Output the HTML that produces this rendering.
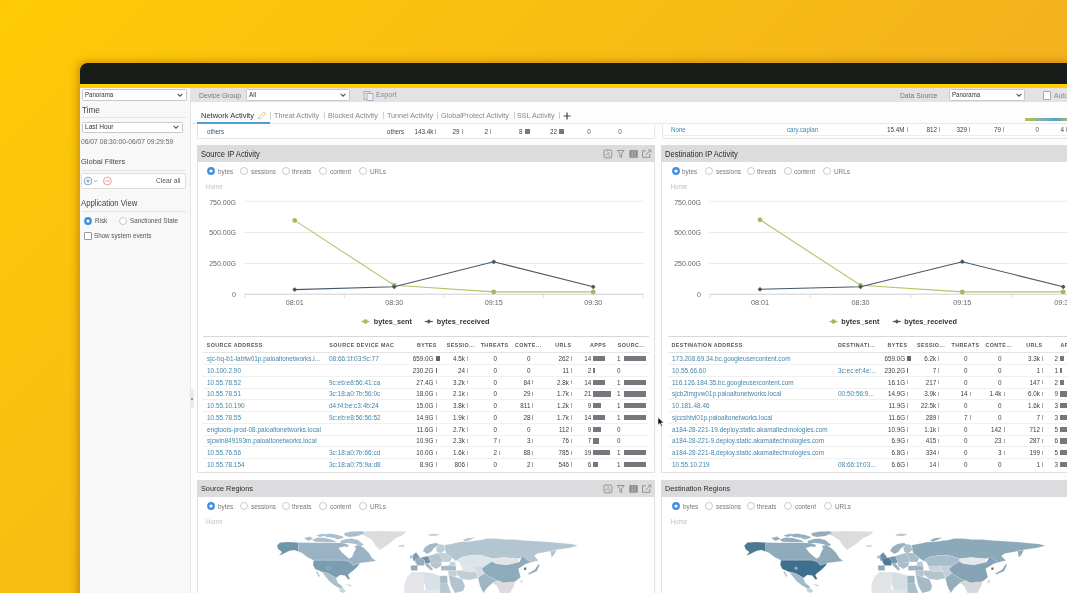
<!DOCTYPE html>
<html><head><meta charset="utf-8"><style>
html,body{margin:0;padding:0;}
body{width:1067px;height:593px;overflow:hidden;position:relative;background:linear-gradient(135deg,#ffca05 0%,#eea629 100%);font-family:"Liberation Sans", sans-serif;}
.t{position:absolute;white-space:nowrap;font-family:"Liberation Sans", sans-serif;}
.r{position:absolute;}
</style></head><body><div id="w" style="position:absolute;left:0;top:0;width:1067px;height:593px;filter:blur(0.45px);">
<div class="r" style="left:80.0px;top:63.0px;width:1100.0px;height:600.0px;background:#171c19;border-top-left-radius:8px;box-shadow:-2px -1px 7px 1px rgba(130,80,0,0.38);"></div>
<div class="r" style="left:80.0px;top:84.0px;width:1100.0px;height:520.0px;background:#fbfbfb;"></div>
<div class="r" style="left:80.0px;top:84.3px;width:1100.0px;height:3.7px;background:#ffd000;"></div>
<div class="r" style="left:190.0px;top:88.0px;width:1000.0px;height:14.0px;background:#e3e3e6;"></div>
<div class="r" style="left:80.0px;top:88.0px;width:111.0px;height:520.0px;background:#f8f8f8;border-right:1px solid #e6e6e6;box-sizing:border-box;"></div>
<div class="r" style="left:191.0px;top:102.0px;width:1000.0px;height:500.0px;background:#fdfdfd;"></div>
<div class="r" style="left:82.0px;top:89.3px;width:104.5px;height:11.5px;background:#fff;border:1px solid #c9c9c9;border-radius:1.5px;box-sizing:border-box;"></div>
<div class="t" style="left:85.0px;top:89.0px;font-size:6.83px;line-height:12px;color:#333;font-weight:normal;transform:scaleX(0.8929);transform-origin:left center;">Panorama</div>
<svg class="r" style="left:176.5px;top:93.0px" width="6" height="4" viewBox="0 0 6 4"><path d="M0.6 0.8 L3 3.2 L5.4 0.8" fill="none" stroke="#555" stroke-width="1.05"/></svg>
<div class="t" style="left:82.0px;top:104.4px;font-size:8.61px;line-height:12px;color:#444;font-weight:normal;transform:scaleX(0.9524);transform-origin:left center;">Time</div>
<div class="r" style="left:82.0px;top:117.3px;width:104.0px;height:1.0px;background:#e4e4e4;"></div>
<div class="r" style="left:82.0px;top:121.5px;width:101.0px;height:11.0px;background:#fff;border:1px solid #c9c9c9;border-radius:1.5px;box-sizing:border-box;"></div>
<div class="t" style="left:85.0px;top:121.0px;font-size:7.39px;line-height:12px;color:#333;font-weight:normal;transform:scaleX(0.8929);transform-origin:left center;">Last Hour</div>
<svg class="r" style="left:173.0px;top:125.0px" width="6" height="4" viewBox="0 0 6 4"><path d="M0.6 0.8 L3 3.2 L5.4 0.8" fill="none" stroke="#555" stroke-width="1.05"/></svg>
<div class="t" style="left:81.2px;top:135.8px;font-size:7.09px;line-height:12px;color:#666;font-weight:normal;transform:scaleX(0.9524);transform-origin:left center;">06/07 08:30:00-06/07 09:29:59</div>
<div class="t" style="left:81.2px;top:156.0px;font-size:8.1px;line-height:12px;color:#444;font-weight:normal;transform:scaleX(0.9259);transform-origin:left center;">Global Filters</div>
<div class="r" style="left:82.0px;top:169.5px;width:104.0px;height:1.0px;background:#e4e4e4;"></div>
<div class="r" style="left:81.0px;top:173.0px;width:105.0px;height:16.0px;background:#fff;border:1px solid #dedede;border-radius:2px;box-sizing:border-box;"></div>
<svg class="r" style="left:83px;top:175.5px" width="30" height="10" viewBox="0 0 30 10"><circle cx="5" cy="5" r="3.9" fill="none" stroke="#6b8fb3" stroke-width="0.8"/><path d="M5 2.8V7.2M2.8 5H7.2" stroke="#6b8fb3" stroke-width="0.8"/><path d="M11.3 4.2L12.8 5.7L14.3 4.2" fill="none" stroke="#6b8fb3" stroke-width="0.8"/><circle cx="24.4" cy="5" r="3.9" fill="none" stroke="#d98a8a" stroke-width="0.8"/><path d="M22.2 5H26.6" stroke="#d98a8a" stroke-width="0.8"/></svg>
<div class="t" style="left:156.0px;top:174.5px;font-size:7.37px;line-height:12px;color:#555;font-weight:normal;transform:scaleX(0.9091);transform-origin:left center;">Clear all</div>
<div class="t" style="left:81.2px;top:196.7px;font-size:8.32px;line-height:12px;color:#444;font-weight:normal;transform:scaleX(0.9259);transform-origin:left center;">Application View</div>
<div class="r" style="left:82.0px;top:210.5px;width:104.0px;height:1.0px;background:#e4e4e4;"></div>
<svg class="r" style="left:83.1px;top:215.5px" width="10" height="10" viewBox="0 0 10 10"><circle cx="5" cy="5" r="3.9" fill="#3d8fe0"/><circle cx="5" cy="5" r="1.6" fill="#fff"/></svg>
<div class="t" style="left:94.8px;top:214.5px;font-size:7.06px;line-height:12px;color:#555;font-weight:normal;transform:scaleX(0.8929);transform-origin:left center;">Risk</div>
<svg class="r" style="left:118.1px;top:215.5px" width="10" height="10" viewBox="0 0 10 10"><circle cx="5" cy="5" r="3.5" fill="#fff" stroke="#bdbdbd" stroke-width="0.8"/></svg>
<div class="t" style="left:130.0px;top:214.5px;font-size:7.06px;line-height:12px;color:#555;font-weight:normal;transform:scaleX(0.8929);transform-origin:left center;">Sanctioned State</div>
<div class="r" style="left:83.5px;top:232.0px;width:8.0px;height:8.0px;background:#fff;border:1px solid #9a9a9a;border-radius:1px;box-sizing:border-box;"></div>
<div class="t" style="left:94.2px;top:230.0px;font-size:7.19px;line-height:12px;color:#555;font-weight:normal;transform:scaleX(0.8696);transform-origin:left center;">Show system events</div>
<div class="r" style="left:190.5px;top:389.0px;width:3.0px;height:19.0px;background:#ececec;"></div>
<div class="r" style="left:191.0px;top:398.0px;width:2.0px;height:2.0px;background:#999;"></div>
<div class="t" style="left:199.0px;top:89.8px;font-size:7.59px;line-height:12px;color:#777;font-weight:normal;transform:scaleX(0.9091);transform-origin:left center;">Device Group</div>
<div class="r" style="left:246.4px;top:89.0px;width:104.0px;height:11.6px;background:#fff;border:1px solid #c9c9c9;border-radius:1.5px;box-sizing:border-box;"></div>
<div class="t" style="left:249.4px;top:88.8px;font-size:7.17px;line-height:12px;color:#333;font-weight:normal;transform:scaleX(0.8929);transform-origin:left center;">All</div>
<svg class="r" style="left:340.4px;top:92.8px" width="6" height="4" viewBox="0 0 6 4"><path d="M0.6 0.8 L3 3.2 L5.4 0.8" fill="none" stroke="#555" stroke-width="1.05"/></svg>
<svg class="r" style="left:363px;top:89.5px" width="11" height="11" viewBox="0 0 11 11"><rect x="1" y="1.5" width="6" height="8" fill="none" stroke="#9aa" stroke-width="0.8"/><rect x="4" y="3.5" width="6" height="7" fill="#eef" stroke="#9aa" stroke-width="0.8"/></svg>
<div class="t" style="left:376.3px;top:89.0px;font-size:7.67px;line-height:12px;color:#888;font-weight:normal;transform:scaleX(0.9259);transform-origin:left center;">Export</div>
<div class="t" style="left:899.6px;top:89.8px;font-size:7.43px;line-height:12px;color:#777;font-weight:normal;transform:scaleX(0.9091);transform-origin:left center;">Data Source</div>
<div class="r" style="left:949.2px;top:89.4px;width:76.3px;height:11.4px;background:#fff;border:1px solid #c9c9c9;border-radius:1.5px;box-sizing:border-box;"></div>
<div class="t" style="left:952.2px;top:89.1px;font-size:6.83px;line-height:12px;color:#333;font-weight:normal;transform:scaleX(0.8929);transform-origin:left center;">Panorama</div>
<svg class="r" style="left:1015.5px;top:93.1px" width="6" height="4" viewBox="0 0 6 4"><path d="M0.6 0.8 L3 3.2 L5.4 0.8" fill="none" stroke="#555" stroke-width="1.05"/></svg>
<div class="r" style="left:1042.6px;top:91.1px;width:8.5px;height:8.5px;background:#fff;border:1px solid #a8a8a8;border-radius:1px;box-sizing:border-box;"></div>
<div class="t" style="left:1053.5px;top:89.8px;font-size:7.34px;line-height:12px;color:#888;font-weight:normal;transform:scaleX(0.9259);transform-origin:left center;">Auto</div>
<div class="t" style="left:200.6px;top:109.6px;font-size:7.88px;line-height:12px;color:#333;font-weight:normal;transform:scaleX(0.9524);transform-origin:left center;">Network Activity</div>
<div class="t" style="left:274.2px;top:109.6px;font-size:7.56px;line-height:12px;color:#888;font-weight:normal;transform:scaleX(0.9524);transform-origin:left center;">Threat Activity</div>
<div class="t" style="left:328.0px;top:109.6px;font-size:7.56px;line-height:12px;color:#888;font-weight:normal;transform:scaleX(0.9524);transform-origin:left center;">Blocked Activity</div>
<div class="t" style="left:386.6px;top:109.6px;font-size:7.56px;line-height:12px;color:#888;font-weight:normal;transform:scaleX(0.9524);transform-origin:left center;">Tunnel Activity</div>
<div class="t" style="left:440.9px;top:109.6px;font-size:7.56px;line-height:12px;color:#888;font-weight:normal;transform:scaleX(0.9524);transform-origin:left center;">GlobalProtect Activity</div>
<div class="t" style="left:517.4px;top:109.6px;font-size:7.56px;line-height:12px;color:#888;font-weight:normal;transform:scaleX(0.9524);transform-origin:left center;">SSL Activity</div>
<div class="r" style="left:270.0px;top:112.0px;width:0.8px;height:7.0px;background:#cfcfcf;"></div>
<div class="r" style="left:323.7px;top:112.0px;width:0.8px;height:7.0px;background:#cfcfcf;"></div>
<div class="r" style="left:382.5px;top:112.0px;width:0.8px;height:7.0px;background:#cfcfcf;"></div>
<div class="r" style="left:437.0px;top:112.0px;width:0.8px;height:7.0px;background:#cfcfcf;"></div>
<div class="r" style="left:513.5px;top:112.0px;width:0.8px;height:7.0px;background:#cfcfcf;"></div>
<div class="r" style="left:559.0px;top:112.0px;width:0.8px;height:7.0px;background:#cfcfcf;"></div>
<svg class="r" style="left:257px;top:111px" width="10" height="9" viewBox="0 0 10 9"><path d="M1.5 7.8 L2 5.8 L6.8 1 L8.6 2.8 L3.8 7.6 Z" fill="none" stroke="#d8c37a" stroke-width="0.9"/></svg>
<svg class="r" style="left:562.5px;top:111.5px" width="8" height="8" viewBox="0 0 8 8"><path d="M4 0.5V7.5M0.5 4H7.5" stroke="#444" stroke-width="1.2"/></svg>
<div class="r" style="left:191.0px;top:122.5px;width:900.0px;height:1.0px;background:#e8e8e8;"></div>
<div class="r" style="left:197.0px;top:122.4px;width:72.5px;height:1.8px;background:#4aa0d6;"></div>
<div class="r" style="left:196.8px;top:124.8px;width:458.0px;height:13.8px;background:#fff;border:1px solid #e3e3e3;border-top:none;border-radius:0 0 2px 2px;box-sizing:border-box;"></div>
<div class="r" style="left:661.5px;top:124.8px;width:500.0px;height:13.8px;background:#fff;border:1px solid #e3e3e3;border-top:none;border-radius:0 0 2px 2px;box-sizing:border-box;"></div>
<div class="r" style="left:662.0px;top:135.3px;width:500.0px;height:0.7px;background:#ececec;"></div>
<div class="t" style="left:206.8px;top:126.1px;font-size:7.13px;line-height:12px;color:#2f5877;font-weight:normal;transform:scaleX(0.8696);transform-origin:left center;">others</div>
<div class="t" style="left:386.6px;top:126.1px;font-size:7.13px;line-height:12px;color:#444;font-weight:normal;transform:scaleX(0.8696);transform-origin:left center;">others</div>
<div class="t" style="right:633.6px;top:126.2px;font-size:6.3px;line-height:12px;color:#3d3d3d;font-weight:normal;">143.4k</div>
<div class="r" style="left:435.4px;top:129.3px;width:1.0px;height:5.0px;background:#aaa;"></div>
<div class="t" style="right:607.5px;top:126.2px;font-size:6.3px;line-height:12px;color:#3d3d3d;font-weight:normal;">29</div>
<div class="r" style="left:461.5px;top:129.3px;width:1.0px;height:5.0px;background:#aaa;"></div>
<div class="t" style="right:579.0px;top:126.2px;font-size:6.3px;line-height:12px;color:#3d3d3d;font-weight:normal;">2</div>
<div class="r" style="left:490.0px;top:129.3px;width:1.0px;height:5.0px;background:#aaa;"></div>
<div class="t" style="right:544.5px;top:126.2px;font-size:6.3px;line-height:12px;color:#3d3d3d;font-weight:normal;">8</div>
<div class="r" style="left:524.5px;top:129.3px;width:5.0px;height:5.0px;background:#777;"></div>
<div class="t" style="right:510.0px;top:126.2px;font-size:6.3px;line-height:12px;color:#3d3d3d;font-weight:normal;">22</div>
<div class="r" style="left:559.0px;top:129.3px;width:5.0px;height:5.0px;background:#777;"></div>
<div class="t" style="left:489.0px;width:200px;text-align:center;top:126.2px;font-size:6.3px;line-height:12px;color:#555;font-weight:normal;">0</div>
<div class="t" style="left:520.0px;width:200px;text-align:center;top:126.2px;font-size:6.3px;line-height:12px;color:#555;font-weight:normal;">0</div>
<div class="t" style="left:671.3px;top:123.6px;font-size:6.94px;line-height:12px;color:#4587aa;font-weight:normal;transform:scaleX(0.8929);transform-origin:left center;">None</div>
<div class="t" style="left:787.3px;top:123.6px;font-size:6.94px;line-height:12px;color:#4587aa;font-weight:normal;transform:scaleX(0.8929);transform-origin:left center;">cary.caplan</div>
<div class="t" style="right:162.5px;top:123.6px;font-size:6.3px;line-height:12px;color:#3d3d3d;font-weight:normal;">15.4M</div>
<div class="r" style="left:906.5px;top:126.7px;width:1.0px;height:5.0px;background:#aaa;"></div>
<div class="t" style="right:130.0px;top:123.6px;font-size:6.3px;line-height:12px;color:#3d3d3d;font-weight:normal;">812</div>
<div class="r" style="left:939.0px;top:126.7px;width:1.0px;height:5.0px;background:#aaa;"></div>
<div class="t" style="right:100.0px;top:123.6px;font-size:6.3px;line-height:12px;color:#3d3d3d;font-weight:normal;">329</div>
<div class="r" style="left:969.0px;top:126.7px;width:1.0px;height:5.0px;background:#aaa;"></div>
<div class="t" style="right:66.0px;top:123.6px;font-size:6.3px;line-height:12px;color:#3d3d3d;font-weight:normal;">79</div>
<div class="r" style="left:1003.0px;top:126.7px;width:1.0px;height:5.0px;background:#aaa;"></div>
<div class="t" style="left:937.2px;width:200px;text-align:center;top:123.6px;font-size:6.3px;line-height:12px;color:#555;font-weight:normal;">0</div>
<div class="t" style="right:3.0px;top:123.6px;font-size:6.3px;line-height:12px;color:#3d3d3d;font-weight:normal;">4</div>
<div class="r" style="left:1066.0px;top:126.7px;width:1.0px;height:5.0px;background:#aaa;"></div>
<div class="r" style="left:1025px;top:117.9px;width:50px;height:2.7px;background:linear-gradient(90deg,#b8c24a 0%,#6cabc8 45%,#58a0c8 60%,#c8c85a 100%);"></div>
<div class="r" style="left:196.8px;top:145.0px;width:458.3px;height:328.0px;background:#fff;border:1px solid #e1e1e1;box-sizing:border-box;"></div>
<div class="r" style="left:196.8px;top:145.0px;width:458.3px;height:16.8px;background:#dcdcdf;"></div>
<div class="t" style="left:200.6px;top:147.7px;font-size:8.36px;line-height:12px;color:#2b2b2b;font-weight:normal;transform:scaleX(0.9091);transform-origin:left center;">Source IP Activity</div>
<svg class="r" style="left:602.9px;top:148.6px" width="52" height="10" viewBox="0 0 52 10"><rect x="1" y="1" width="7.8" height="7.8" rx="1.3" fill="none" stroke="#8a8a8a" stroke-width="0.9"/><path d="M2.5 6.8L4.5 4.8L7.5 7.5M4.3 2.7L6.5 4.5" fill="none" stroke="#8a8a8a" stroke-width="0.8"/><path d="M14.3 1.5H21.2L18.6 4.6V8.5L16.9 7.6V4.6Z" fill="none" stroke="#8a8a8a" stroke-width="0.9"/><rect x="26.3" y="1" width="8.5" height="7.8" rx="1" fill="#8d8d8d"/><path d="M29.2 1.8V8M31.9 1.8V8" stroke="#c9c9c9" stroke-width="0.7"/><path d="M46.8 5V8.3H39.5V1.8H43" fill="none" stroke="#8a8a8a" stroke-width="0.9"/><path d="M42.5 6L47.5 1.2M45.3 1H47.8V3.5" fill="none" stroke="#8a8a8a" stroke-width="0.9"/></svg>
<svg class="r" style="left:206.3px;top:166.2px" width="10" height="10" viewBox="0 0 10 10"><circle cx="5" cy="5" r="3.9" fill="#3d8fe0"/><circle cx="5" cy="5" r="1.6" fill="#fff"/></svg>
<div class="t" style="left:217.6px;top:165.9px;font-size:6.91px;line-height:12px;color:#777;font-weight:normal;transform:scaleX(0.9259);transform-origin:left center;">bytes</div>
<svg class="r" style="left:239.4px;top:166.2px" width="10" height="10" viewBox="0 0 10 10"><circle cx="5" cy="5" r="3.5" fill="#fff" stroke="#bdbdbd" stroke-width="0.8"/></svg>
<div class="t" style="left:251.0px;top:165.9px;font-size:6.91px;line-height:12px;color:#777;font-weight:normal;transform:scaleX(0.9259);transform-origin:left center;">sessions</div>
<svg class="r" style="left:280.9px;top:166.2px" width="10" height="10" viewBox="0 0 10 10"><circle cx="5" cy="5" r="3.5" fill="#fff" stroke="#bdbdbd" stroke-width="0.8"/></svg>
<div class="t" style="left:292.4px;top:165.9px;font-size:6.91px;line-height:12px;color:#777;font-weight:normal;transform:scaleX(0.9259);transform-origin:left center;">threats</div>
<svg class="r" style="left:318.3px;top:166.2px" width="10" height="10" viewBox="0 0 10 10"><circle cx="5" cy="5" r="3.5" fill="#fff" stroke="#bdbdbd" stroke-width="0.8"/></svg>
<div class="t" style="left:329.8px;top:165.9px;font-size:6.91px;line-height:12px;color:#777;font-weight:normal;transform:scaleX(0.9259);transform-origin:left center;">content</div>
<svg class="r" style="left:357.8px;top:166.2px" width="10" height="10" viewBox="0 0 10 10"><circle cx="5" cy="5" r="3.5" fill="#fff" stroke="#bdbdbd" stroke-width="0.8"/></svg>
<div class="t" style="left:369.5px;top:165.9px;font-size:6.91px;line-height:12px;color:#777;font-weight:normal;transform:scaleX(0.9259);transform-origin:left center;">URLs</div>
<div class="t" style="left:205.9px;top:181.0px;font-size:6.3px;line-height:12px;color:#c2c2c2;font-weight:normal;">Home</div>
<div class="t" style="right:831.0px;top:196.8px;font-size:7.0px;line-height:12px;color:#666;font-weight:normal;">750.00G</div>
<div class="t" style="right:831.0px;top:227.3px;font-size:7.0px;line-height:12px;color:#666;font-weight:normal;">500.00G</div>
<div class="t" style="right:831.0px;top:258.3px;font-size:7.0px;line-height:12px;color:#666;font-weight:normal;">250.00G</div>
<div class="t" style="right:831.0px;top:288.5px;font-size:7.0px;line-height:12px;color:#666;font-weight:normal;">0</div>
<svg class="r" style="left:0px;top:0px" width="1067" height="593" viewBox="0 0 1067 593"><path d="M244.6 201.3H643.4" stroke="#e6e6e6" stroke-width="0.9"/><path d="M244.6 232.5H643.4" stroke="#e6e6e6" stroke-width="0.9"/><path d="M244.6 263.5H643.4" stroke="#e6e6e6" stroke-width="0.9"/><path d="M244.6 294.2H643.4" stroke="#cfcfcf" stroke-width="1"/><path d="M244.9 294.2V297.8" stroke="#dadada" stroke-width="0.9"/><path d="M344.4 294.2V297.8" stroke="#dadada" stroke-width="0.9"/><path d="M443.9 294.2V297.8" stroke="#dadada" stroke-width="0.9"/><path d="M543.5 294.2V297.8" stroke="#dadada" stroke-width="0.9"/><path d="M643.0 294.2V297.8" stroke="#dadada" stroke-width="0.9"/><polyline points="294.7,220.4 394.2,285.3 493.7,291.9 593.2,291.9" fill="none" stroke="#b8c266" stroke-width="1.1"/><polyline points="294.7,289.6 394.2,286.8 493.7,261.8 593.2,286.8" fill="none" stroke="#43596a" stroke-width="1.1"/><circle cx="294.7" cy="220.4" r="2.4" fill="#aab65a"/><circle cx="394.2" cy="285.3" r="2.4" fill="#aab65a"/><circle cx="493.7" cy="291.9" r="2.4" fill="#aab65a"/><circle cx="593.2" cy="291.9" r="2.4" fill="#aab65a"/><path d="M294.7 287.2L297.1 289.6L294.7 292.0L292.3 289.6Z" fill="#43596a"/><path d="M394.2 284.4L396.6 286.8L394.2 289.2L391.8 286.8Z" fill="#43596a"/><path d="M493.7 259.4L496.1 261.8L493.7 264.2L491.3 261.8Z" fill="#43596a"/><path d="M593.2 284.4L595.6 286.8L593.2 289.2L590.8 286.8Z" fill="#43596a"/></svg>
<div class="t" style="left:194.7px;width:200px;text-align:center;top:297.0px;font-size:7.2px;line-height:12px;color:#666;font-weight:normal;">08:01</div>
<div class="t" style="left:294.2px;width:200px;text-align:center;top:297.0px;font-size:7.2px;line-height:12px;color:#666;font-weight:normal;">08:30</div>
<div class="t" style="left:393.7px;width:200px;text-align:center;top:297.0px;font-size:7.2px;line-height:12px;color:#666;font-weight:normal;">09:15</div>
<div class="t" style="left:493.2px;width:200px;text-align:center;top:297.0px;font-size:7.2px;line-height:12px;color:#666;font-weight:normal;">09:30</div>
<svg class="r" style="left:360px;top:317px" width="80" height="9" viewBox="0 0 80 9"><path d="M1.3 4.5H9.7" stroke="#b3bd63" stroke-width="1.2"/><circle cx="5.5" cy="4.5" r="2.3" fill="#aab65a"/><path d="M64.8 4.5H72.8" stroke="#43596a" stroke-width="1.2"/><path d="M68.8 2.2L71.1 4.5L68.8 6.8L66.5 4.5Z" fill="#43596a"/></svg>
<div class="t" style="left:373.8px;top:315.6px;font-size:7.3px;line-height:12px;color:#333;font-weight:bold;">bytes_sent</div>
<div class="t" style="left:436.7px;top:315.6px;font-size:7.3px;line-height:12px;color:#333;font-weight:bold;">bytes_received</div>
<div class="r" style="left:661.2px;top:145.0px;width:460.0px;height:328.0px;background:#fff;border:1px solid #e1e1e1;box-sizing:border-box;"></div>
<div class="r" style="left:661.2px;top:145.0px;width:460.0px;height:16.8px;background:#dcdcdf;"></div>
<div class="t" style="left:665.0px;top:147.7px;font-size:8.36px;line-height:12px;color:#2b2b2b;font-weight:normal;transform:scaleX(0.9091);transform-origin:left center;">Destination IP Activity</div>
<svg class="r" style="left:670.9px;top:166.0px" width="10" height="10" viewBox="0 0 10 10"><circle cx="5" cy="5" r="3.9" fill="#3d8fe0"/><circle cx="5" cy="5" r="1.6" fill="#fff"/></svg>
<div class="t" style="left:682.2px;top:165.7px;font-size:6.91px;line-height:12px;color:#777;font-weight:normal;transform:scaleX(0.9259);transform-origin:left center;">bytes</div>
<svg class="r" style="left:704.0px;top:166.0px" width="10" height="10" viewBox="0 0 10 10"><circle cx="5" cy="5" r="3.5" fill="#fff" stroke="#bdbdbd" stroke-width="0.8"/></svg>
<div class="t" style="left:715.6px;top:165.7px;font-size:6.91px;line-height:12px;color:#777;font-weight:normal;transform:scaleX(0.9259);transform-origin:left center;">sessions</div>
<svg class="r" style="left:745.5px;top:166.0px" width="10" height="10" viewBox="0 0 10 10"><circle cx="5" cy="5" r="3.5" fill="#fff" stroke="#bdbdbd" stroke-width="0.8"/></svg>
<div class="t" style="left:757.0px;top:165.7px;font-size:6.91px;line-height:12px;color:#777;font-weight:normal;transform:scaleX(0.9259);transform-origin:left center;">threats</div>
<svg class="r" style="left:782.9px;top:166.0px" width="10" height="10" viewBox="0 0 10 10"><circle cx="5" cy="5" r="3.5" fill="#fff" stroke="#bdbdbd" stroke-width="0.8"/></svg>
<div class="t" style="left:794.4px;top:165.7px;font-size:6.91px;line-height:12px;color:#777;font-weight:normal;transform:scaleX(0.9259);transform-origin:left center;">content</div>
<svg class="r" style="left:822.4px;top:166.0px" width="10" height="10" viewBox="0 0 10 10"><circle cx="5" cy="5" r="3.5" fill="#fff" stroke="#bdbdbd" stroke-width="0.8"/></svg>
<div class="t" style="left:834.1px;top:165.7px;font-size:6.91px;line-height:12px;color:#777;font-weight:normal;transform:scaleX(0.9259);transform-origin:left center;">URLs</div>
<div class="t" style="left:670.4px;top:181.0px;font-size:6.3px;line-height:12px;color:#c2c2c2;font-weight:normal;">Home</div>
<div class="t" style="right:366.0px;top:196.8px;font-size:7.0px;line-height:12px;color:#666;font-weight:normal;">750.00G</div>
<div class="t" style="right:366.0px;top:227.3px;font-size:7.0px;line-height:12px;color:#666;font-weight:normal;">500.00G</div>
<div class="t" style="right:366.0px;top:258.3px;font-size:7.0px;line-height:12px;color:#666;font-weight:normal;">250.00G</div>
<div class="t" style="right:366.0px;top:288.5px;font-size:7.0px;line-height:12px;color:#666;font-weight:normal;">0</div>
<svg class="r" style="left:0px;top:0px" width="1067" height="593" viewBox="0 0 1067 593"><path d="M709.5 201.3H1125.0" stroke="#e6e6e6" stroke-width="0.9"/><path d="M709.5 232.5H1125.0" stroke="#e6e6e6" stroke-width="0.9"/><path d="M709.5 263.5H1125.0" stroke="#e6e6e6" stroke-width="0.9"/><path d="M709.5 294.2H1125.0" stroke="#cfcfcf" stroke-width="1"/><path d="M709.7 294.2V297.8" stroke="#dadada" stroke-width="0.9"/><path d="M810.3 294.2V297.8" stroke="#dadada" stroke-width="0.9"/><path d="M910.9 294.2V297.8" stroke="#dadada" stroke-width="0.9"/><path d="M1011.5 294.2V297.8" stroke="#dadada" stroke-width="0.9"/><path d="M1112.1 294.2V297.8" stroke="#dadada" stroke-width="0.9"/><polyline points="760.0,219.8 860.6,285.3 962.3,291.9 1063.2,291.9" fill="none" stroke="#b8c266" stroke-width="1.1"/><polyline points="760.0,289.3 860.6,286.8 962.3,261.7 1063.2,286.8" fill="none" stroke="#43596a" stroke-width="1.1"/><circle cx="760.0" cy="219.8" r="2.4" fill="#aab65a"/><circle cx="860.6" cy="285.3" r="2.4" fill="#aab65a"/><circle cx="962.3" cy="291.9" r="2.4" fill="#aab65a"/><circle cx="1063.2" cy="291.9" r="2.4" fill="#aab65a"/><path d="M760.0 286.9L762.4 289.3L760.0 291.7L757.6 289.3Z" fill="#43596a"/><path d="M860.6 284.4L863.0 286.8L860.6 289.2L858.2 286.8Z" fill="#43596a"/><path d="M962.3 259.3L964.7 261.7L962.3 264.1L959.9 261.7Z" fill="#43596a"/><path d="M1063.2 284.4L1065.6 286.8L1063.2 289.2L1060.8 286.8Z" fill="#43596a"/></svg>
<div class="t" style="left:660.0px;width:200px;text-align:center;top:297.0px;font-size:7.2px;line-height:12px;color:#666;font-weight:normal;">08:01</div>
<div class="t" style="left:760.6px;width:200px;text-align:center;top:297.0px;font-size:7.2px;line-height:12px;color:#666;font-weight:normal;">08:30</div>
<div class="t" style="left:862.3px;width:200px;text-align:center;top:297.0px;font-size:7.2px;line-height:12px;color:#666;font-weight:normal;">09:15</div>
<div class="t" style="left:963.2px;width:200px;text-align:center;top:297.0px;font-size:7.2px;line-height:12px;color:#666;font-weight:normal;">09:30</div>
<svg class="r" style="left:827.5px;top:317px" width="80" height="9" viewBox="0 0 80 9"><path d="M1.3 4.5H9.7" stroke="#b3bd63" stroke-width="1.2"/><circle cx="5.5" cy="4.5" r="2.3" fill="#aab65a"/><path d="M64.8 4.5H72.8" stroke="#43596a" stroke-width="1.2"/><path d="M68.8 2.2L71.1 4.5L68.8 6.8L66.5 4.5Z" fill="#43596a"/></svg>
<div class="t" style="left:841.3px;top:315.6px;font-size:7.3px;line-height:12px;color:#333;font-weight:bold;">bytes_sent</div>
<div class="t" style="left:904.2px;top:315.6px;font-size:7.3px;line-height:12px;color:#333;font-weight:bold;">bytes_received</div>
<div class="r" style="left:203.3px;top:336.2px;width:445.7px;height:1.2px;background:#d8d8d8;"></div>
<div class="r" style="left:203.3px;top:352.0px;width:445.7px;height:0.8px;background:#e4e4e4;"></div>
<div class="t" style="left:206.7px;top:338.9px;font-size:5.3px;line-height:12px;color:#555;font-weight:bold;letter-spacing:0.45px;">SOURCE ADDRESS</div>
<div class="t" style="left:329.3px;top:338.9px;font-size:5.3px;line-height:12px;color:#555;font-weight:bold;letter-spacing:0.45px;">SOURCE DEVICE MAC</div>
<div class="t" style="left:416.9px;top:338.9px;font-size:5.3px;line-height:12px;color:#555;font-weight:bold;letter-spacing:0.45px;">BYTES</div>
<div class="t" style="left:446.7px;top:338.9px;font-size:5.3px;line-height:12px;color:#555;font-weight:bold;letter-spacing:0.45px;">SESSIO...</div>
<div class="t" style="left:480.7px;top:338.9px;font-size:5.3px;line-height:12px;color:#555;font-weight:bold;letter-spacing:0.45px;">THREATS</div>
<div class="t" style="left:515.0px;top:338.9px;font-size:5.3px;line-height:12px;color:#555;font-weight:bold;letter-spacing:0.45px;">CONTE...</div>
<div class="t" style="left:555.2px;top:338.9px;font-size:5.3px;line-height:12px;color:#555;font-weight:bold;letter-spacing:0.45px;">URLS</div>
<div class="t" style="left:590.0px;top:338.9px;font-size:5.3px;line-height:12px;color:#555;font-weight:bold;letter-spacing:0.45px;">APPS</div>
<div class="t" style="left:617.8px;top:338.9px;font-size:5.3px;line-height:12px;color:#555;font-weight:bold;letter-spacing:0.45px;">SOURC...</div>
<div class="r" style="left:203.3px;top:364.0px;width:445.7px;height:0.7px;background:#f0f0f0;"></div>
<div class="r" style="left:203.3px;top:375.8px;width:445.7px;height:0.7px;background:#f0f0f0;"></div>
<div class="r" style="left:203.3px;top:387.5px;width:445.7px;height:0.7px;background:#f0f0f0;"></div>
<div class="r" style="left:203.3px;top:399.3px;width:445.7px;height:0.7px;background:#f0f0f0;"></div>
<div class="r" style="left:203.3px;top:411.1px;width:445.7px;height:0.7px;background:#f0f0f0;"></div>
<div class="r" style="left:203.3px;top:422.8px;width:445.7px;height:0.7px;background:#f0f0f0;"></div>
<div class="r" style="left:203.3px;top:434.6px;width:445.7px;height:0.7px;background:#f0f0f0;"></div>
<div class="r" style="left:203.3px;top:446.4px;width:445.7px;height:0.7px;background:#f0f0f0;"></div>
<div class="r" style="left:203.3px;top:458.1px;width:445.7px;height:0.7px;background:#f0f0f0;"></div>
<div class="t" style="left:206.7px;top:353.0px;font-size:6.84px;line-height:12px;color:#4587aa;font-weight:normal;transform:scaleX(0.9434);transform-origin:left center;">sjc-hq-b1-labfw01p.paloaltonetworks.l...</div>
<div class="t" style="left:329.3px;top:353.0px;font-size:6.84px;line-height:12px;color:#4587aa;font-weight:normal;transform:scaleX(0.9434);transform-origin:left center;">08:66:1f:03:9c:77</div>
<div class="t" style="right:633.5px;top:353.0px;font-size:6.3px;line-height:12px;color:#3d3d3d;font-weight:normal;">659.0G</div>
<div class="r" style="left:435.5px;top:356.0px;width:4.5px;height:5.2px;background:#666;"></div>
<div class="t" style="right:602.0px;top:353.0px;font-size:6.3px;line-height:12px;color:#3d3d3d;font-weight:normal;">4.5k</div>
<div class="r" style="left:467.0px;top:356.4px;width:1.0px;height:4.5px;background:#b4b4b4;"></div>
<div class="t" style="right:570.1px;top:353.0px;font-size:6.3px;line-height:12px;color:#3d3d3d;font-weight:normal;">0</div>
<div class="t" style="right:536.6px;top:353.0px;font-size:6.3px;line-height:12px;color:#3d3d3d;font-weight:normal;">0</div>
<div class="t" style="right:498.0px;top:353.0px;font-size:6.3px;line-height:12px;color:#3d3d3d;font-weight:normal;">262</div>
<div class="r" style="left:571.0px;top:356.4px;width:0.8px;height:4.5px;background:#aaa;"></div>
<div class="t" style="right:475.7px;top:353.0px;font-size:6.3px;line-height:12px;color:#3d3d3d;font-weight:normal;">14</div>
<div class="r" style="left:593.2px;top:356.0px;width:12.2px;height:5.3px;background:#76777d;"></div>
<div class="t" style="right:446.4px;top:353.0px;font-size:6.3px;line-height:12px;color:#3d3d3d;font-weight:normal;">1</div>
<div class="r" style="left:623.5px;top:356.0px;width:22.4px;height:5.3px;background:#76777d;"></div>
<div class="t" style="left:206.7px;top:364.8px;font-size:6.84px;line-height:12px;color:#4587aa;font-weight:normal;transform:scaleX(0.9434);transform-origin:left center;">10.100.2.90</div>
<div class="t" style="right:633.5px;top:364.8px;font-size:6.3px;line-height:12px;color:#3d3d3d;font-weight:normal;">230.2G</div>
<div class="r" style="left:435.5px;top:367.8px;width:1.7px;height:5.2px;background:#666;"></div>
<div class="t" style="right:602.0px;top:364.8px;font-size:6.3px;line-height:12px;color:#3d3d3d;font-weight:normal;">24</div>
<div class="r" style="left:467.0px;top:368.1px;width:1.0px;height:4.5px;background:#b4b4b4;"></div>
<div class="t" style="right:570.1px;top:364.8px;font-size:6.3px;line-height:12px;color:#3d3d3d;font-weight:normal;">0</div>
<div class="t" style="right:536.6px;top:364.8px;font-size:6.3px;line-height:12px;color:#3d3d3d;font-weight:normal;">0</div>
<div class="t" style="right:498.0px;top:364.8px;font-size:6.3px;line-height:12px;color:#3d3d3d;font-weight:normal;">11</div>
<div class="r" style="left:571.0px;top:368.1px;width:0.8px;height:4.5px;background:#aaa;"></div>
<div class="t" style="right:475.7px;top:364.8px;font-size:6.3px;line-height:12px;color:#3d3d3d;font-weight:normal;">2</div>
<div class="r" style="left:593.2px;top:367.7px;width:1.7px;height:5.3px;background:#76777d;"></div>
<div class="t" style="right:446.4px;top:364.8px;font-size:6.3px;line-height:12px;color:#3d3d3d;font-weight:normal;">0</div>
<div class="t" style="left:206.7px;top:376.5px;font-size:6.84px;line-height:12px;color:#4587aa;font-weight:normal;transform:scaleX(0.9434);transform-origin:left center;">10.55.78.52</div>
<div class="t" style="left:329.3px;top:376.5px;font-size:6.84px;line-height:12px;color:#4587aa;font-weight:normal;transform:scaleX(0.9434);transform-origin:left center;">9c:eb:e8:56:41:ca</div>
<div class="t" style="right:633.5px;top:376.5px;font-size:6.3px;line-height:12px;color:#3d3d3d;font-weight:normal;">27.4G</div>
<div class="r" style="left:435.5px;top:379.9px;width:0.8px;height:4.5px;background:#aaa;"></div>
<div class="t" style="right:602.0px;top:376.5px;font-size:6.3px;line-height:12px;color:#3d3d3d;font-weight:normal;">3.2k</div>
<div class="r" style="left:467.0px;top:379.9px;width:1.0px;height:4.5px;background:#b4b4b4;"></div>
<div class="t" style="right:570.1px;top:376.5px;font-size:6.3px;line-height:12px;color:#3d3d3d;font-weight:normal;">0</div>
<div class="t" style="right:536.6px;top:376.5px;font-size:6.3px;line-height:12px;color:#3d3d3d;font-weight:normal;">84</div>
<div class="r" style="left:532.4px;top:379.9px;width:0.8px;height:4.5px;background:#aaa;"></div>
<div class="t" style="right:498.0px;top:376.5px;font-size:6.3px;line-height:12px;color:#3d3d3d;font-weight:normal;">2.8k</div>
<div class="r" style="left:571.0px;top:379.9px;width:0.8px;height:4.5px;background:#aaa;"></div>
<div class="t" style="right:475.7px;top:376.5px;font-size:6.3px;line-height:12px;color:#3d3d3d;font-weight:normal;">14</div>
<div class="r" style="left:593.2px;top:379.5px;width:12.2px;height:5.3px;background:#76777d;"></div>
<div class="t" style="right:446.4px;top:376.5px;font-size:6.3px;line-height:12px;color:#3d3d3d;font-weight:normal;">1</div>
<div class="r" style="left:623.5px;top:379.5px;width:22.4px;height:5.3px;background:#76777d;"></div>
<div class="t" style="left:206.7px;top:388.3px;font-size:6.84px;line-height:12px;color:#4587aa;font-weight:normal;transform:scaleX(0.9434);transform-origin:left center;">10.55.78.51</div>
<div class="t" style="left:329.3px;top:388.3px;font-size:6.84px;line-height:12px;color:#4587aa;font-weight:normal;transform:scaleX(0.9434);transform-origin:left center;">3c:18:a0:7b:56:0c</div>
<div class="t" style="right:633.5px;top:388.3px;font-size:6.3px;line-height:12px;color:#3d3d3d;font-weight:normal;">18.0G</div>
<div class="r" style="left:435.5px;top:391.7px;width:0.8px;height:4.5px;background:#aaa;"></div>
<div class="t" style="right:602.0px;top:388.3px;font-size:6.3px;line-height:12px;color:#3d3d3d;font-weight:normal;">2.1k</div>
<div class="r" style="left:467.0px;top:391.7px;width:1.0px;height:4.5px;background:#b4b4b4;"></div>
<div class="t" style="right:570.1px;top:388.3px;font-size:6.3px;line-height:12px;color:#3d3d3d;font-weight:normal;">0</div>
<div class="t" style="right:536.6px;top:388.3px;font-size:6.3px;line-height:12px;color:#3d3d3d;font-weight:normal;">29</div>
<div class="r" style="left:532.4px;top:391.7px;width:0.8px;height:4.5px;background:#aaa;"></div>
<div class="t" style="right:498.0px;top:388.3px;font-size:6.3px;line-height:12px;color:#3d3d3d;font-weight:normal;">1.7k</div>
<div class="r" style="left:571.0px;top:391.7px;width:0.8px;height:4.5px;background:#aaa;"></div>
<div class="t" style="right:475.7px;top:388.3px;font-size:6.3px;line-height:12px;color:#3d3d3d;font-weight:normal;">21</div>
<div class="r" style="left:593.2px;top:391.3px;width:18.3px;height:5.3px;background:#76777d;"></div>
<div class="t" style="right:446.4px;top:388.3px;font-size:6.3px;line-height:12px;color:#3d3d3d;font-weight:normal;">1</div>
<div class="r" style="left:623.5px;top:391.3px;width:22.4px;height:5.3px;background:#76777d;"></div>
<div class="t" style="left:206.7px;top:400.1px;font-size:6.84px;line-height:12px;color:#4587aa;font-weight:normal;transform:scaleX(0.9434);transform-origin:left center;">10.55.10.190</div>
<div class="t" style="left:329.3px;top:400.1px;font-size:6.84px;line-height:12px;color:#4587aa;font-weight:normal;transform:scaleX(0.9434);transform-origin:left center;">d4:f4:be:c3:4b:24</div>
<div class="t" style="right:633.5px;top:400.1px;font-size:6.3px;line-height:12px;color:#3d3d3d;font-weight:normal;">15.0G</div>
<div class="r" style="left:435.5px;top:403.4px;width:0.8px;height:4.5px;background:#aaa;"></div>
<div class="t" style="right:602.0px;top:400.1px;font-size:6.3px;line-height:12px;color:#3d3d3d;font-weight:normal;">3.8k</div>
<div class="r" style="left:467.0px;top:403.4px;width:1.0px;height:4.5px;background:#b4b4b4;"></div>
<div class="t" style="right:570.1px;top:400.1px;font-size:6.3px;line-height:12px;color:#3d3d3d;font-weight:normal;">0</div>
<div class="t" style="right:536.6px;top:400.1px;font-size:6.3px;line-height:12px;color:#3d3d3d;font-weight:normal;">811</div>
<div class="r" style="left:532.4px;top:403.4px;width:0.8px;height:4.5px;background:#aaa;"></div>
<div class="t" style="right:498.0px;top:400.1px;font-size:6.3px;line-height:12px;color:#3d3d3d;font-weight:normal;">1.2k</div>
<div class="r" style="left:571.0px;top:403.4px;width:0.8px;height:4.5px;background:#aaa;"></div>
<div class="t" style="right:475.7px;top:400.1px;font-size:6.3px;line-height:12px;color:#3d3d3d;font-weight:normal;">9</div>
<div class="r" style="left:593.2px;top:403.0px;width:7.8px;height:5.3px;background:#76777d;"></div>
<div class="t" style="right:446.4px;top:400.1px;font-size:6.3px;line-height:12px;color:#3d3d3d;font-weight:normal;">1</div>
<div class="r" style="left:623.5px;top:403.0px;width:22.4px;height:5.3px;background:#76777d;"></div>
<div class="t" style="left:206.7px;top:411.9px;font-size:6.84px;line-height:12px;color:#4587aa;font-weight:normal;transform:scaleX(0.9434);transform-origin:left center;">10.55.78.55</div>
<div class="t" style="left:329.3px;top:411.9px;font-size:6.84px;line-height:12px;color:#4587aa;font-weight:normal;transform:scaleX(0.9434);transform-origin:left center;">9c:eb:e8:56:56:52</div>
<div class="t" style="right:633.5px;top:411.9px;font-size:6.3px;line-height:12px;color:#3d3d3d;font-weight:normal;">14.9G</div>
<div class="r" style="left:435.5px;top:415.2px;width:0.8px;height:4.5px;background:#aaa;"></div>
<div class="t" style="right:602.0px;top:411.9px;font-size:6.3px;line-height:12px;color:#3d3d3d;font-weight:normal;">1.9k</div>
<div class="r" style="left:467.0px;top:415.2px;width:1.0px;height:4.5px;background:#b4b4b4;"></div>
<div class="t" style="right:570.1px;top:411.9px;font-size:6.3px;line-height:12px;color:#3d3d3d;font-weight:normal;">0</div>
<div class="t" style="right:536.6px;top:411.9px;font-size:6.3px;line-height:12px;color:#3d3d3d;font-weight:normal;">28</div>
<div class="r" style="left:532.4px;top:415.2px;width:0.8px;height:4.5px;background:#aaa;"></div>
<div class="t" style="right:498.0px;top:411.9px;font-size:6.3px;line-height:12px;color:#3d3d3d;font-weight:normal;">1.7k</div>
<div class="r" style="left:571.0px;top:415.2px;width:0.8px;height:4.5px;background:#aaa;"></div>
<div class="t" style="right:475.7px;top:411.9px;font-size:6.3px;line-height:12px;color:#3d3d3d;font-weight:normal;">14</div>
<div class="r" style="left:593.2px;top:414.8px;width:12.2px;height:5.3px;background:#76777d;"></div>
<div class="t" style="right:446.4px;top:411.9px;font-size:6.3px;line-height:12px;color:#3d3d3d;font-weight:normal;">1</div>
<div class="r" style="left:623.5px;top:414.8px;width:22.4px;height:5.3px;background:#76777d;"></div>
<div class="t" style="left:206.7px;top:423.6px;font-size:6.84px;line-height:12px;color:#4587aa;font-weight:normal;transform:scaleX(0.9434);transform-origin:left center;">engtools-prod-08.paloaltonetworks.local</div>
<div class="t" style="right:633.5px;top:423.6px;font-size:6.3px;line-height:12px;color:#3d3d3d;font-weight:normal;">11.6G</div>
<div class="r" style="left:435.5px;top:427.0px;width:0.8px;height:4.5px;background:#aaa;"></div>
<div class="t" style="right:602.0px;top:423.6px;font-size:6.3px;line-height:12px;color:#3d3d3d;font-weight:normal;">2.7k</div>
<div class="r" style="left:467.0px;top:427.0px;width:1.0px;height:4.5px;background:#b4b4b4;"></div>
<div class="t" style="right:570.1px;top:423.6px;font-size:6.3px;line-height:12px;color:#3d3d3d;font-weight:normal;">0</div>
<div class="t" style="right:536.6px;top:423.6px;font-size:6.3px;line-height:12px;color:#3d3d3d;font-weight:normal;">0</div>
<div class="t" style="right:498.0px;top:423.6px;font-size:6.3px;line-height:12px;color:#3d3d3d;font-weight:normal;">112</div>
<div class="r" style="left:571.0px;top:427.0px;width:0.8px;height:4.5px;background:#aaa;"></div>
<div class="t" style="right:475.7px;top:423.6px;font-size:6.3px;line-height:12px;color:#3d3d3d;font-weight:normal;">9</div>
<div class="r" style="left:593.2px;top:426.6px;width:7.8px;height:5.3px;background:#76777d;"></div>
<div class="t" style="right:446.4px;top:423.6px;font-size:6.3px;line-height:12px;color:#3d3d3d;font-weight:normal;">0</div>
<div class="t" style="left:206.7px;top:435.4px;font-size:6.84px;line-height:12px;color:#4587aa;font-weight:normal;transform:scaleX(0.9434);transform-origin:left center;">sjcwin849193m.paloaltonetworks.local</div>
<div class="t" style="right:633.5px;top:435.4px;font-size:6.3px;line-height:12px;color:#3d3d3d;font-weight:normal;">10.9G</div>
<div class="r" style="left:435.5px;top:438.7px;width:0.8px;height:4.5px;background:#aaa;"></div>
<div class="t" style="right:602.0px;top:435.4px;font-size:6.3px;line-height:12px;color:#3d3d3d;font-weight:normal;">2.3k</div>
<div class="r" style="left:467.0px;top:438.7px;width:1.0px;height:4.5px;background:#b4b4b4;"></div>
<div class="t" style="right:570.1px;top:435.4px;font-size:6.3px;line-height:12px;color:#3d3d3d;font-weight:normal;">7</div>
<div class="r" style="left:498.9px;top:438.7px;width:0.8px;height:4.5px;background:#aaa;"></div>
<div class="t" style="right:536.6px;top:435.4px;font-size:6.3px;line-height:12px;color:#3d3d3d;font-weight:normal;">3</div>
<div class="r" style="left:532.4px;top:438.7px;width:0.8px;height:4.5px;background:#aaa;"></div>
<div class="t" style="right:498.0px;top:435.4px;font-size:6.3px;line-height:12px;color:#3d3d3d;font-weight:normal;">76</div>
<div class="r" style="left:571.0px;top:438.7px;width:0.8px;height:4.5px;background:#aaa;"></div>
<div class="t" style="right:475.7px;top:435.4px;font-size:6.3px;line-height:12px;color:#3d3d3d;font-weight:normal;">7</div>
<div class="r" style="left:593.2px;top:438.3px;width:6.1px;height:5.3px;background:#76777d;"></div>
<div class="t" style="right:446.4px;top:435.4px;font-size:6.3px;line-height:12px;color:#3d3d3d;font-weight:normal;">0</div>
<div class="t" style="left:206.7px;top:447.2px;font-size:6.84px;line-height:12px;color:#4587aa;font-weight:normal;transform:scaleX(0.9434);transform-origin:left center;">10.55.76.56</div>
<div class="t" style="left:329.3px;top:447.2px;font-size:6.84px;line-height:12px;color:#4587aa;font-weight:normal;transform:scaleX(0.9434);transform-origin:left center;">3c:18:a0:7b:66:cd</div>
<div class="t" style="right:633.5px;top:447.2px;font-size:6.3px;line-height:12px;color:#3d3d3d;font-weight:normal;">10.0G</div>
<div class="r" style="left:435.5px;top:450.5px;width:0.8px;height:4.5px;background:#aaa;"></div>
<div class="t" style="right:602.0px;top:447.2px;font-size:6.3px;line-height:12px;color:#3d3d3d;font-weight:normal;">1.6k</div>
<div class="r" style="left:467.0px;top:450.5px;width:1.0px;height:4.5px;background:#b4b4b4;"></div>
<div class="t" style="right:570.1px;top:447.2px;font-size:6.3px;line-height:12px;color:#3d3d3d;font-weight:normal;">2</div>
<div class="r" style="left:498.9px;top:450.5px;width:0.8px;height:4.5px;background:#aaa;"></div>
<div class="t" style="right:536.6px;top:447.2px;font-size:6.3px;line-height:12px;color:#3d3d3d;font-weight:normal;">88</div>
<div class="r" style="left:532.4px;top:450.5px;width:0.8px;height:4.5px;background:#aaa;"></div>
<div class="t" style="right:498.0px;top:447.2px;font-size:6.3px;line-height:12px;color:#3d3d3d;font-weight:normal;">785</div>
<div class="r" style="left:571.0px;top:450.5px;width:0.8px;height:4.5px;background:#aaa;"></div>
<div class="t" style="right:475.7px;top:447.2px;font-size:6.3px;line-height:12px;color:#3d3d3d;font-weight:normal;">19</div>
<div class="r" style="left:593.2px;top:450.1px;width:16.5px;height:5.3px;background:#76777d;"></div>
<div class="t" style="right:446.4px;top:447.2px;font-size:6.3px;line-height:12px;color:#3d3d3d;font-weight:normal;">1</div>
<div class="r" style="left:623.5px;top:450.1px;width:22.4px;height:5.3px;background:#76777d;"></div>
<div class="t" style="left:206.7px;top:458.9px;font-size:6.84px;line-height:12px;color:#4587aa;font-weight:normal;transform:scaleX(0.9434);transform-origin:left center;">10.55.78.154</div>
<div class="t" style="left:329.3px;top:458.9px;font-size:6.84px;line-height:12px;color:#4587aa;font-weight:normal;transform:scaleX(0.9434);transform-origin:left center;">3c:18:a0:75:9a:d8</div>
<div class="t" style="right:633.5px;top:458.9px;font-size:6.3px;line-height:12px;color:#3d3d3d;font-weight:normal;">8.9G</div>
<div class="r" style="left:435.5px;top:462.3px;width:0.8px;height:4.5px;background:#aaa;"></div>
<div class="t" style="right:602.0px;top:458.9px;font-size:6.3px;line-height:12px;color:#3d3d3d;font-weight:normal;">806</div>
<div class="r" style="left:467.0px;top:462.3px;width:1.0px;height:4.5px;background:#b4b4b4;"></div>
<div class="t" style="right:570.1px;top:458.9px;font-size:6.3px;line-height:12px;color:#3d3d3d;font-weight:normal;">0</div>
<div class="t" style="right:536.6px;top:458.9px;font-size:6.3px;line-height:12px;color:#3d3d3d;font-weight:normal;">2</div>
<div class="r" style="left:532.4px;top:462.3px;width:0.8px;height:4.5px;background:#aaa;"></div>
<div class="t" style="right:498.0px;top:458.9px;font-size:6.3px;line-height:12px;color:#3d3d3d;font-weight:normal;">546</div>
<div class="r" style="left:571.0px;top:462.3px;width:0.8px;height:4.5px;background:#aaa;"></div>
<div class="t" style="right:475.7px;top:458.9px;font-size:6.3px;line-height:12px;color:#3d3d3d;font-weight:normal;">6</div>
<div class="r" style="left:593.2px;top:461.9px;width:5.2px;height:5.3px;background:#76777d;"></div>
<div class="t" style="right:446.4px;top:458.9px;font-size:6.3px;line-height:12px;color:#3d3d3d;font-weight:normal;">1</div>
<div class="r" style="left:623.5px;top:461.9px;width:22.4px;height:5.3px;background:#76777d;"></div>
<div class="r" style="left:668.0px;top:336.2px;width:399.0px;height:1.2px;background:#d8d8d8;"></div>
<div class="r" style="left:668.0px;top:352.0px;width:399.0px;height:0.8px;background:#e4e4e4;"></div>
<div class="t" style="left:671.5px;top:338.9px;font-size:5.3px;line-height:12px;color:#555;font-weight:bold;letter-spacing:0.45px;">DESTINATION ADDRESS</div>
<div class="t" style="left:838.0px;top:338.9px;font-size:5.3px;line-height:12px;color:#555;font-weight:bold;letter-spacing:0.45px;">DESTINATI...</div>
<div class="t" style="left:887.6px;top:338.9px;font-size:5.3px;line-height:12px;color:#555;font-weight:bold;letter-spacing:0.45px;">BYTES</div>
<div class="t" style="left:917.0px;top:338.9px;font-size:5.3px;line-height:12px;color:#555;font-weight:bold;letter-spacing:0.45px;">SESSIO...</div>
<div class="t" style="left:951.6px;top:338.9px;font-size:5.3px;line-height:12px;color:#555;font-weight:bold;letter-spacing:0.45px;">THREATS</div>
<div class="t" style="left:985.4px;top:338.9px;font-size:5.3px;line-height:12px;color:#555;font-weight:bold;letter-spacing:0.45px;">CONTE...</div>
<div class="t" style="left:1026.2px;top:338.9px;font-size:5.3px;line-height:12px;color:#555;font-weight:bold;letter-spacing:0.45px;">URLS</div>
<div class="t" style="left:1060.4px;top:338.9px;font-size:5.3px;line-height:12px;color:#555;font-weight:bold;letter-spacing:0.45px;">APPS</div>
<div class="r" style="left:668.0px;top:364.0px;width:399.0px;height:0.7px;background:#f0f0f0;"></div>
<div class="r" style="left:668.0px;top:375.8px;width:399.0px;height:0.7px;background:#f0f0f0;"></div>
<div class="r" style="left:668.0px;top:387.5px;width:399.0px;height:0.7px;background:#f0f0f0;"></div>
<div class="r" style="left:668.0px;top:399.3px;width:399.0px;height:0.7px;background:#f0f0f0;"></div>
<div class="r" style="left:668.0px;top:411.1px;width:399.0px;height:0.7px;background:#f0f0f0;"></div>
<div class="r" style="left:668.0px;top:422.8px;width:399.0px;height:0.7px;background:#f0f0f0;"></div>
<div class="r" style="left:668.0px;top:434.6px;width:399.0px;height:0.7px;background:#f0f0f0;"></div>
<div class="r" style="left:668.0px;top:446.4px;width:399.0px;height:0.7px;background:#f0f0f0;"></div>
<div class="r" style="left:668.0px;top:458.1px;width:399.0px;height:0.7px;background:#f0f0f0;"></div>
<div class="t" style="left:671.5px;top:353.0px;font-size:6.84px;line-height:12px;color:#4587aa;font-weight:normal;transform:scaleX(0.9434);transform-origin:left center;">173.208.69.34.bc.googleusercontent.com</div>
<div class="t" style="right:161.8px;top:353.0px;font-size:6.3px;line-height:12px;color:#3d3d3d;font-weight:normal;">659.0G</div>
<div class="r" style="left:906.6px;top:356.0px;width:4.8px;height:5.2px;background:#666;"></div>
<div class="t" style="right:130.8px;top:353.0px;font-size:6.3px;line-height:12px;color:#3d3d3d;font-weight:normal;">6.2k</div>
<div class="r" style="left:938.2px;top:356.4px;width:1.0px;height:4.5px;background:#b4b4b4;"></div>
<div class="t" style="right:99.5px;top:353.0px;font-size:6.3px;line-height:12px;color:#3d3d3d;font-weight:normal;">0</div>
<div class="t" style="right:65.5px;top:353.0px;font-size:6.3px;line-height:12px;color:#3d3d3d;font-weight:normal;">0</div>
<div class="t" style="right:27.0px;top:353.0px;font-size:6.3px;line-height:12px;color:#3d3d3d;font-weight:normal;">3.3k</div>
<div class="r" style="left:1042.0px;top:356.4px;width:0.8px;height:4.5px;background:#aaa;"></div>
<div class="t" style="right:9.0px;top:353.0px;font-size:6.3px;line-height:12px;color:#3d3d3d;font-weight:normal;">2</div>
<div class="r" style="left:1059.9px;top:356.0px;width:4.5px;height:5.3px;background:#76777d;"></div>
<div class="t" style="left:671.5px;top:364.8px;font-size:6.84px;line-height:12px;color:#4587aa;font-weight:normal;transform:scaleX(0.9434);transform-origin:left center;">10.55.66.60</div>
<div class="t" style="left:838.0px;top:364.8px;font-size:6.84px;line-height:12px;color:#4587aa;font-weight:normal;transform:scaleX(0.9434);transform-origin:left center;">3c:ec:ef:4e:...</div>
<div class="t" style="right:161.8px;top:364.8px;font-size:6.3px;line-height:12px;color:#3d3d3d;font-weight:normal;">230.2G</div>
<div class="r" style="left:906.6px;top:367.8px;width:1.7px;height:5.2px;background:#666;"></div>
<div class="t" style="right:130.8px;top:364.8px;font-size:6.3px;line-height:12px;color:#3d3d3d;font-weight:normal;">7</div>
<div class="r" style="left:938.2px;top:368.1px;width:1.0px;height:4.5px;background:#b4b4b4;"></div>
<div class="t" style="right:99.5px;top:364.8px;font-size:6.3px;line-height:12px;color:#3d3d3d;font-weight:normal;">0</div>
<div class="t" style="right:65.5px;top:364.8px;font-size:6.3px;line-height:12px;color:#3d3d3d;font-weight:normal;">0</div>
<div class="t" style="right:27.0px;top:364.8px;font-size:6.3px;line-height:12px;color:#3d3d3d;font-weight:normal;">1</div>
<div class="r" style="left:1042.0px;top:368.1px;width:0.8px;height:4.5px;background:#aaa;"></div>
<div class="t" style="right:9.0px;top:364.8px;font-size:6.3px;line-height:12px;color:#3d3d3d;font-weight:normal;">1</div>
<div class="r" style="left:1059.9px;top:367.7px;width:1.8px;height:5.3px;background:#76777d;"></div>
<div class="t" style="left:671.5px;top:376.5px;font-size:6.84px;line-height:12px;color:#4587aa;font-weight:normal;transform:scaleX(0.9434);transform-origin:left center;">116.126.184.35.bc.googleusercontent.com</div>
<div class="t" style="right:161.8px;top:376.5px;font-size:6.3px;line-height:12px;color:#3d3d3d;font-weight:normal;">16.1G</div>
<div class="r" style="left:906.6px;top:379.9px;width:0.8px;height:4.5px;background:#aaa;"></div>
<div class="t" style="right:130.8px;top:376.5px;font-size:6.3px;line-height:12px;color:#3d3d3d;font-weight:normal;">217</div>
<div class="r" style="left:938.2px;top:379.9px;width:1.0px;height:4.5px;background:#b4b4b4;"></div>
<div class="t" style="right:99.5px;top:376.5px;font-size:6.3px;line-height:12px;color:#3d3d3d;font-weight:normal;">0</div>
<div class="t" style="right:65.5px;top:376.5px;font-size:6.3px;line-height:12px;color:#3d3d3d;font-weight:normal;">0</div>
<div class="t" style="right:27.0px;top:376.5px;font-size:6.3px;line-height:12px;color:#3d3d3d;font-weight:normal;">147</div>
<div class="r" style="left:1042.0px;top:379.9px;width:0.8px;height:4.5px;background:#aaa;"></div>
<div class="t" style="right:9.0px;top:376.5px;font-size:6.3px;line-height:12px;color:#3d3d3d;font-weight:normal;">2</div>
<div class="r" style="left:1059.9px;top:379.5px;width:4.5px;height:5.3px;background:#76777d;"></div>
<div class="t" style="left:671.5px;top:388.3px;font-size:6.84px;line-height:12px;color:#4587aa;font-weight:normal;transform:scaleX(0.9434);transform-origin:left center;">sjcb2imgvw01p.paloaltonetworks.local</div>
<div class="t" style="left:838.0px;top:388.3px;font-size:6.84px;line-height:12px;color:#4587aa;font-weight:normal;transform:scaleX(0.9434);transform-origin:left center;">00:50:56:9...</div>
<div class="t" style="right:161.8px;top:388.3px;font-size:6.3px;line-height:12px;color:#3d3d3d;font-weight:normal;">14.9G</div>
<div class="r" style="left:906.6px;top:391.7px;width:0.8px;height:4.5px;background:#aaa;"></div>
<div class="t" style="right:130.8px;top:388.3px;font-size:6.3px;line-height:12px;color:#3d3d3d;font-weight:normal;">3.9k</div>
<div class="r" style="left:938.2px;top:391.7px;width:1.0px;height:4.5px;background:#b4b4b4;"></div>
<div class="t" style="right:99.5px;top:388.3px;font-size:6.3px;line-height:12px;color:#3d3d3d;font-weight:normal;">14</div>
<div class="r" style="left:969.5px;top:391.7px;width:0.8px;height:4.5px;background:#aaa;"></div>
<div class="t" style="right:65.5px;top:388.3px;font-size:6.3px;line-height:12px;color:#3d3d3d;font-weight:normal;">1.4k</div>
<div class="r" style="left:1003.5px;top:391.7px;width:0.8px;height:4.5px;background:#aaa;"></div>
<div class="t" style="right:27.0px;top:388.3px;font-size:6.3px;line-height:12px;color:#3d3d3d;font-weight:normal;">6.0k</div>
<div class="r" style="left:1042.0px;top:391.7px;width:0.8px;height:4.5px;background:#aaa;"></div>
<div class="t" style="right:9.0px;top:388.3px;font-size:6.3px;line-height:12px;color:#3d3d3d;font-weight:normal;">9</div>
<div class="r" style="left:1059.9px;top:391.3px;width:10.0px;height:5.3px;background:#76777d;"></div>
<div class="t" style="left:671.5px;top:400.1px;font-size:6.84px;line-height:12px;color:#4587aa;font-weight:normal;transform:scaleX(0.9434);transform-origin:left center;">10.181.48.46</div>
<div class="t" style="right:161.8px;top:400.1px;font-size:6.3px;line-height:12px;color:#3d3d3d;font-weight:normal;">11.9G</div>
<div class="r" style="left:906.6px;top:403.4px;width:0.8px;height:4.5px;background:#aaa;"></div>
<div class="t" style="right:130.8px;top:400.1px;font-size:6.3px;line-height:12px;color:#3d3d3d;font-weight:normal;">22.5k</div>
<div class="r" style="left:938.2px;top:403.4px;width:1.0px;height:4.5px;background:#b4b4b4;"></div>
<div class="t" style="right:99.5px;top:400.1px;font-size:6.3px;line-height:12px;color:#3d3d3d;font-weight:normal;">0</div>
<div class="t" style="right:65.5px;top:400.1px;font-size:6.3px;line-height:12px;color:#3d3d3d;font-weight:normal;">0</div>
<div class="t" style="right:27.0px;top:400.1px;font-size:6.3px;line-height:12px;color:#3d3d3d;font-weight:normal;">1.6k</div>
<div class="r" style="left:1042.0px;top:403.4px;width:0.8px;height:4.5px;background:#aaa;"></div>
<div class="t" style="right:9.0px;top:400.1px;font-size:6.3px;line-height:12px;color:#3d3d3d;font-weight:normal;">3</div>
<div class="r" style="left:1059.9px;top:403.0px;width:10.0px;height:5.3px;background:#76777d;"></div>
<div class="t" style="left:671.5px;top:411.9px;font-size:6.84px;line-height:12px;color:#4587aa;font-weight:normal;transform:scaleX(0.9434);transform-origin:left center;">sjccshtvl01p.paloaltonetworks.local</div>
<div class="t" style="right:161.8px;top:411.9px;font-size:6.3px;line-height:12px;color:#3d3d3d;font-weight:normal;">11.6G</div>
<div class="r" style="left:906.6px;top:415.2px;width:0.8px;height:4.5px;background:#aaa;"></div>
<div class="t" style="right:130.8px;top:411.9px;font-size:6.3px;line-height:12px;color:#3d3d3d;font-weight:normal;">289</div>
<div class="r" style="left:938.2px;top:415.2px;width:1.0px;height:4.5px;background:#b4b4b4;"></div>
<div class="t" style="right:99.5px;top:411.9px;font-size:6.3px;line-height:12px;color:#3d3d3d;font-weight:normal;">7</div>
<div class="r" style="left:969.5px;top:415.2px;width:0.8px;height:4.5px;background:#aaa;"></div>
<div class="t" style="right:65.5px;top:411.9px;font-size:6.3px;line-height:12px;color:#3d3d3d;font-weight:normal;">0</div>
<div class="t" style="right:27.0px;top:411.9px;font-size:6.3px;line-height:12px;color:#3d3d3d;font-weight:normal;">7</div>
<div class="r" style="left:1042.0px;top:415.2px;width:0.8px;height:4.5px;background:#aaa;"></div>
<div class="t" style="right:9.0px;top:411.9px;font-size:6.3px;line-height:12px;color:#3d3d3d;font-weight:normal;">3</div>
<div class="r" style="left:1059.9px;top:414.8px;width:10.0px;height:5.3px;background:#76777d;"></div>
<div class="t" style="left:671.5px;top:423.6px;font-size:6.84px;line-height:12px;color:#4587aa;font-weight:normal;transform:scaleX(0.9434);transform-origin:left center;">a184-28-221-19.deploy.static.akamaitechnologies.com</div>
<div class="t" style="right:161.8px;top:423.6px;font-size:6.3px;line-height:12px;color:#3d3d3d;font-weight:normal;">10.9G</div>
<div class="r" style="left:906.6px;top:427.0px;width:0.8px;height:4.5px;background:#aaa;"></div>
<div class="t" style="right:130.8px;top:423.6px;font-size:6.3px;line-height:12px;color:#3d3d3d;font-weight:normal;">1.1k</div>
<div class="r" style="left:938.2px;top:427.0px;width:1.0px;height:4.5px;background:#b4b4b4;"></div>
<div class="t" style="right:99.5px;top:423.6px;font-size:6.3px;line-height:12px;color:#3d3d3d;font-weight:normal;">0</div>
<div class="t" style="right:65.5px;top:423.6px;font-size:6.3px;line-height:12px;color:#3d3d3d;font-weight:normal;">142</div>
<div class="r" style="left:1003.5px;top:427.0px;width:0.8px;height:4.5px;background:#aaa;"></div>
<div class="t" style="right:27.0px;top:423.6px;font-size:6.3px;line-height:12px;color:#3d3d3d;font-weight:normal;">712</div>
<div class="r" style="left:1042.0px;top:427.0px;width:0.8px;height:4.5px;background:#aaa;"></div>
<div class="t" style="right:9.0px;top:423.6px;font-size:6.3px;line-height:12px;color:#3d3d3d;font-weight:normal;">5</div>
<div class="r" style="left:1059.9px;top:426.6px;width:10.0px;height:5.3px;background:#76777d;"></div>
<div class="t" style="left:671.5px;top:435.4px;font-size:6.84px;line-height:12px;color:#4587aa;font-weight:normal;transform:scaleX(0.9434);transform-origin:left center;">a184-28-221-9.deploy.static.akamaitechnologies.com</div>
<div class="t" style="right:161.8px;top:435.4px;font-size:6.3px;line-height:12px;color:#3d3d3d;font-weight:normal;">6.9G</div>
<div class="r" style="left:906.6px;top:438.7px;width:0.8px;height:4.5px;background:#aaa;"></div>
<div class="t" style="right:130.8px;top:435.4px;font-size:6.3px;line-height:12px;color:#3d3d3d;font-weight:normal;">415</div>
<div class="r" style="left:938.2px;top:438.7px;width:1.0px;height:4.5px;background:#b4b4b4;"></div>
<div class="t" style="right:99.5px;top:435.4px;font-size:6.3px;line-height:12px;color:#3d3d3d;font-weight:normal;">0</div>
<div class="t" style="right:65.5px;top:435.4px;font-size:6.3px;line-height:12px;color:#3d3d3d;font-weight:normal;">23</div>
<div class="r" style="left:1003.5px;top:438.7px;width:0.8px;height:4.5px;background:#aaa;"></div>
<div class="t" style="right:27.0px;top:435.4px;font-size:6.3px;line-height:12px;color:#3d3d3d;font-weight:normal;">287</div>
<div class="r" style="left:1042.0px;top:438.7px;width:0.8px;height:4.5px;background:#aaa;"></div>
<div class="t" style="right:9.0px;top:435.4px;font-size:6.3px;line-height:12px;color:#3d3d3d;font-weight:normal;">6</div>
<div class="r" style="left:1059.9px;top:438.3px;width:10.0px;height:5.3px;background:#76777d;"></div>
<div class="t" style="left:671.5px;top:447.2px;font-size:6.84px;line-height:12px;color:#4587aa;font-weight:normal;transform:scaleX(0.9434);transform-origin:left center;">a184-28-221-8.deploy.static.akamaitechnologies.com</div>
<div class="t" style="right:161.8px;top:447.2px;font-size:6.3px;line-height:12px;color:#3d3d3d;font-weight:normal;">6.8G</div>
<div class="r" style="left:906.6px;top:450.5px;width:0.8px;height:4.5px;background:#aaa;"></div>
<div class="t" style="right:130.8px;top:447.2px;font-size:6.3px;line-height:12px;color:#3d3d3d;font-weight:normal;">334</div>
<div class="r" style="left:938.2px;top:450.5px;width:1.0px;height:4.5px;background:#b4b4b4;"></div>
<div class="t" style="right:99.5px;top:447.2px;font-size:6.3px;line-height:12px;color:#3d3d3d;font-weight:normal;">0</div>
<div class="t" style="right:65.5px;top:447.2px;font-size:6.3px;line-height:12px;color:#3d3d3d;font-weight:normal;">3</div>
<div class="r" style="left:1003.5px;top:450.5px;width:0.8px;height:4.5px;background:#aaa;"></div>
<div class="t" style="right:27.0px;top:447.2px;font-size:6.3px;line-height:12px;color:#3d3d3d;font-weight:normal;">199</div>
<div class="r" style="left:1042.0px;top:450.5px;width:0.8px;height:4.5px;background:#aaa;"></div>
<div class="t" style="right:9.0px;top:447.2px;font-size:6.3px;line-height:12px;color:#3d3d3d;font-weight:normal;">5</div>
<div class="r" style="left:1059.9px;top:450.1px;width:10.0px;height:5.3px;background:#76777d;"></div>
<div class="t" style="left:671.5px;top:458.9px;font-size:6.84px;line-height:12px;color:#4587aa;font-weight:normal;transform:scaleX(0.9434);transform-origin:left center;">10.55.10.219</div>
<div class="t" style="left:838.0px;top:458.9px;font-size:6.84px;line-height:12px;color:#4587aa;font-weight:normal;transform:scaleX(0.9434);transform-origin:left center;">08:66:1f:03...</div>
<div class="t" style="right:161.8px;top:458.9px;font-size:6.3px;line-height:12px;color:#3d3d3d;font-weight:normal;">6.6G</div>
<div class="r" style="left:906.6px;top:462.3px;width:0.8px;height:4.5px;background:#aaa;"></div>
<div class="t" style="right:130.8px;top:458.9px;font-size:6.3px;line-height:12px;color:#3d3d3d;font-weight:normal;">14</div>
<div class="r" style="left:938.2px;top:462.3px;width:1.0px;height:4.5px;background:#b4b4b4;"></div>
<div class="t" style="right:99.5px;top:458.9px;font-size:6.3px;line-height:12px;color:#3d3d3d;font-weight:normal;">0</div>
<div class="t" style="right:65.5px;top:458.9px;font-size:6.3px;line-height:12px;color:#3d3d3d;font-weight:normal;">0</div>
<div class="t" style="right:27.0px;top:458.9px;font-size:6.3px;line-height:12px;color:#3d3d3d;font-weight:normal;">1</div>
<div class="r" style="left:1042.0px;top:462.3px;width:0.8px;height:4.5px;background:#aaa;"></div>
<div class="t" style="right:9.0px;top:458.9px;font-size:6.3px;line-height:12px;color:#3d3d3d;font-weight:normal;">3</div>
<div class="r" style="left:1059.9px;top:461.9px;width:10.0px;height:5.3px;background:#76777d;"></div>
<div class="r" style="left:196.8px;top:480.0px;width:458.3px;height:130.0px;background:#fff;border:1px solid #e1e1e1;box-sizing:border-box;"></div>
<div class="r" style="left:196.8px;top:480.0px;width:458.3px;height:16.5px;background:#dcdcdf;"></div>
<div class="t" style="left:200.6px;top:482.6px;font-size:8.03px;line-height:12px;color:#2b2b2b;font-weight:normal;transform:scaleX(0.9091);transform-origin:left center;">Source Regions</div>
<svg class="r" style="left:602.9px;top:483.5px" width="52" height="10" viewBox="0 0 52 10"><rect x="1" y="1" width="7.8" height="7.8" rx="1.3" fill="none" stroke="#8a8a8a" stroke-width="0.9"/><path d="M2.5 6.8L4.5 4.8L7.5 7.5M4.3 2.7L6.5 4.5" fill="none" stroke="#8a8a8a" stroke-width="0.8"/><path d="M14.3 1.5H21.2L18.6 4.6V8.5L16.9 7.6V4.6Z" fill="none" stroke="#8a8a8a" stroke-width="0.9"/><rect x="26.3" y="1" width="8.5" height="7.8" rx="1" fill="#8d8d8d"/><path d="M29.2 1.8V8M31.9 1.8V8" stroke="#c9c9c9" stroke-width="0.7"/><path d="M46.8 5V8.3H39.5V1.8H43" fill="none" stroke="#8a8a8a" stroke-width="0.9"/><path d="M42.5 6L47.5 1.2M45.3 1H47.8V3.5" fill="none" stroke="#8a8a8a" stroke-width="0.9"/></svg>
<svg class="r" style="left:206.3px;top:501.1px" width="10" height="10" viewBox="0 0 10 10"><circle cx="5" cy="5" r="3.9" fill="#3d8fe0"/><circle cx="5" cy="5" r="1.6" fill="#fff"/></svg>
<div class="t" style="left:217.6px;top:500.8px;font-size:6.91px;line-height:12px;color:#777;font-weight:normal;transform:scaleX(0.9259);transform-origin:left center;">bytes</div>
<svg class="r" style="left:239.4px;top:501.1px" width="10" height="10" viewBox="0 0 10 10"><circle cx="5" cy="5" r="3.5" fill="#fff" stroke="#bdbdbd" stroke-width="0.8"/></svg>
<div class="t" style="left:251.0px;top:500.8px;font-size:6.91px;line-height:12px;color:#777;font-weight:normal;transform:scaleX(0.9259);transform-origin:left center;">sessions</div>
<svg class="r" style="left:280.9px;top:501.1px" width="10" height="10" viewBox="0 0 10 10"><circle cx="5" cy="5" r="3.5" fill="#fff" stroke="#bdbdbd" stroke-width="0.8"/></svg>
<div class="t" style="left:292.4px;top:500.8px;font-size:6.91px;line-height:12px;color:#777;font-weight:normal;transform:scaleX(0.9259);transform-origin:left center;">threats</div>
<svg class="r" style="left:318.3px;top:501.1px" width="10" height="10" viewBox="0 0 10 10"><circle cx="5" cy="5" r="3.5" fill="#fff" stroke="#bdbdbd" stroke-width="0.8"/></svg>
<div class="t" style="left:329.8px;top:500.8px;font-size:6.91px;line-height:12px;color:#777;font-weight:normal;transform:scaleX(0.9259);transform-origin:left center;">content</div>
<svg class="r" style="left:357.8px;top:501.1px" width="10" height="10" viewBox="0 0 10 10"><circle cx="5" cy="5" r="3.5" fill="#fff" stroke="#bdbdbd" stroke-width="0.8"/></svg>
<div class="t" style="left:369.5px;top:500.8px;font-size:6.91px;line-height:12px;color:#777;font-weight:normal;transform:scaleX(0.9259);transform-origin:left center;">URLs</div>
<div class="t" style="left:205.9px;top:516.0px;font-size:6.3px;line-height:12px;color:#c2c2c2;font-weight:normal;">Home</div>
<div class="r" style="left:661.2px;top:480.0px;width:460.0px;height:130.0px;background:#fff;border:1px solid #e1e1e1;box-sizing:border-box;"></div>
<div class="r" style="left:661.2px;top:480.0px;width:460.0px;height:16.5px;background:#dcdcdf;"></div>
<div class="t" style="left:665.0px;top:482.6px;font-size:8.03px;line-height:12px;color:#2b2b2b;font-weight:normal;transform:scaleX(0.9091);transform-origin:left center;">Destination Regions</div>
<svg class="r" style="left:671.3px;top:500.9px" width="10" height="10" viewBox="0 0 10 10"><circle cx="5" cy="5" r="3.9" fill="#3d8fe0"/><circle cx="5" cy="5" r="1.6" fill="#fff"/></svg>
<div class="t" style="left:682.6px;top:500.6px;font-size:6.91px;line-height:12px;color:#777;font-weight:normal;transform:scaleX(0.9259);transform-origin:left center;">bytes</div>
<svg class="r" style="left:704.4px;top:500.9px" width="10" height="10" viewBox="0 0 10 10"><circle cx="5" cy="5" r="3.5" fill="#fff" stroke="#bdbdbd" stroke-width="0.8"/></svg>
<div class="t" style="left:716.0px;top:500.6px;font-size:6.91px;line-height:12px;color:#777;font-weight:normal;transform:scaleX(0.9259);transform-origin:left center;">sessions</div>
<svg class="r" style="left:745.9px;top:500.9px" width="10" height="10" viewBox="0 0 10 10"><circle cx="5" cy="5" r="3.5" fill="#fff" stroke="#bdbdbd" stroke-width="0.8"/></svg>
<div class="t" style="left:757.4px;top:500.6px;font-size:6.91px;line-height:12px;color:#777;font-weight:normal;transform:scaleX(0.9259);transform-origin:left center;">threats</div>
<svg class="r" style="left:783.3px;top:500.9px" width="10" height="10" viewBox="0 0 10 10"><circle cx="5" cy="5" r="3.5" fill="#fff" stroke="#bdbdbd" stroke-width="0.8"/></svg>
<div class="t" style="left:794.8px;top:500.6px;font-size:6.91px;line-height:12px;color:#777;font-weight:normal;transform:scaleX(0.9259);transform-origin:left center;">content</div>
<svg class="r" style="left:822.8px;top:500.9px" width="10" height="10" viewBox="0 0 10 10"><circle cx="5" cy="5" r="3.5" fill="#fff" stroke="#bdbdbd" stroke-width="0.8"/></svg>
<div class="t" style="left:834.5px;top:500.6px;font-size:6.91px;line-height:12px;color:#777;font-weight:normal;transform:scaleX(0.9259);transform-origin:left center;">URLs</div>
<div class="t" style="left:670.4px;top:516.0px;font-size:6.3px;line-height:12px;color:#c2c2c2;font-weight:normal;">Home</div>
<svg class="r" style="left:0px;top:0px" width="1067" height="593" viewBox="0 0 1067 593"><polygon points="404.3,584.0 407.0,577.0 412.0,572.0 424.0,572.0 424.0,590.0 426.0,590.0 440.0,590.0 440.0,593.0 404.0,593.0" fill="#e3e5e8" stroke="#ffffff" stroke-width="0.25" stroke-opacity="0.5"/><polygon points="424.0,572.0 432.0,573.0 440.0,575.7 440.0,590.0 426.0,590.0 424.0,582.0" fill="#d8e1e7" stroke="#ffffff" stroke-width="0.25" stroke-opacity="0.5"/><polygon points="440.0,583.0 447.5,583.0 451.0,593.0 440.0,593.0" fill="#b7c8d2" stroke="#ffffff" stroke-width="0.25" stroke-opacity="0.5"/><polygon points="439.9,575.7 447.3,575.7 447.5,583.0 440.0,583.0" fill="#a9bcc8" stroke="#ffffff" stroke-width="0.25" stroke-opacity="0.5"/><polygon points="448.4,574.6 455.0,577.0 462.0,579.0 465.0,586.0 463.0,591.0 455.0,593.0 451.0,586.0" fill="#b1c3ce" stroke="#ffffff" stroke-width="0.25" stroke-opacity="0.5"/><polygon points="448.0,570.5 456.0,570.5 457.0,575.0 455.0,577.0 448.4,574.6" fill="#c3d0d8" stroke="#ffffff" stroke-width="0.25" stroke-opacity="0.5"/><polygon points="359.0,531.5 380.0,531.0 406.0,531.5 403.0,535.0 396.0,538.0 390.0,543.0 383.0,548.0 379.4,550.0 375.0,545.0 372.0,540.0 365.0,536.0 359.0,533.0" fill="#dcdcdc" stroke="#ffffff" stroke-width="0.25" stroke-opacity="0.5"/><polygon points="398.5,545.0 405.0,544.8 404.0,547.0 399.0,547.0" fill="#d6d6d6" stroke="#ffffff" stroke-width="0.25" stroke-opacity="0.5"/><polygon points="427.6,534.5 434.0,533.5 440.4,534.5 436.0,536.0 430.0,536.0" fill="#c9d3da" stroke="#ffffff" stroke-width="0.25" stroke-opacity="0.5"/><polygon points="462.7,540.0 468.0,538.0 475.0,537.5 470.0,540.0 465.0,541.5" fill="#b7c8d3" stroke="#ffffff" stroke-width="0.25" stroke-opacity="0.5"/><polygon points="340.0,541.0 346.0,539.0 352.0,538.5 358.0,540.0 364.0,545.0 361.0,546.0 355.0,544.0 348.0,543.0 341.0,543.5" fill="#a9bece" stroke="#ffffff" stroke-width="0.25" stroke-opacity="0.5"/><polygon points="312.0,539.5 318.0,537.5 326.0,538.0 333.0,540.0 337.0,542.0 325.0,542.2 315.0,541.8" fill="#a9bece" stroke="#ffffff" stroke-width="0.25" stroke-opacity="0.5"/><polygon points="304.0,538.0 310.0,536.5 313.0,539.0 308.0,541.0" fill="#a9bece" stroke="#ffffff" stroke-width="0.25" stroke-opacity="0.5"/><polygon points="316.0,535.5 323.0,533.5 326.0,535.5 320.0,537.0" fill="#a9bece" stroke="#ffffff" stroke-width="0.25" stroke-opacity="0.5"/><polygon points="333.0,537.5 341.0,536.0 344.0,538.0 337.0,539.5" fill="#a9bece" stroke="#ffffff" stroke-width="0.25" stroke-opacity="0.5"/><polygon points="345.0,545.0 349.0,544.5 348.0,547.0 345.0,547.0" fill="#a9bece" stroke="#ffffff" stroke-width="0.25" stroke-opacity="0.5"/><polygon points="322.0,534.5 330.0,533.5 338.0,535.0 344.0,537.0 336.0,538.0 326.0,537.0" fill="#a9bece" stroke="#ffffff" stroke-width="0.25" stroke-opacity="0.5"/><polygon points="344.0,533.0 352.0,531.5 362.0,531.3 365.0,533.0 358.0,536.0 350.0,537.0 345.0,536.0" fill="#a9bece" stroke="#ffffff" stroke-width="0.25" stroke-opacity="0.5"/><polygon points="298.2,542.5 312.0,542.7 336.0,542.7 344.0,543.3 349.0,545.3 344.0,546.5 338.5,548.0 342.0,552.5 349.0,558.5 352.0,557.0 354.0,552.0 356.0,548.5 354.5,546.0 359.0,545.0 364.0,548.0 369.0,553.0 372.0,558.0 376.0,561.0 368.0,562.0 360.0,563.0 353.0,565.5 350.0,562.0 344.5,560.2 313.6,560.2 307.0,557.0 302.0,553.0 298.2,551.5" fill="#99b3c4" stroke="#ffffff" stroke-width="0.25" stroke-opacity="0.5"/><polygon points="277.0,545.5 280.0,542.5 288.0,542.0 298.2,542.5 298.2,551.5 294.0,550.0 289.0,551.0 283.0,554.0 279.0,555.5 282.0,552.0 278.0,549.0" fill="#6f94ab" stroke="#ffffff" stroke-width="0.25" stroke-opacity="0.5"/><polygon points="313.6,560.2 344.5,560.2 350.0,562.0 353.0,565.5 360.0,563.0 358.0,566.0 354.0,570.0 350.0,573.0 348.0,575.0 350.0,579.0 348.0,579.5 345.0,575.5 340.0,575.0 336.0,578.0 332.0,575.5 327.0,573.0 322.0,572.0 315.0,569.0 313.0,565.0" fill="#7a9db2" stroke="#ffffff" stroke-width="0.25" stroke-opacity="0.5"/><polygon points="322.0,572.0 327.0,573.0 332.0,575.5 336.0,578.0 338.0,583.0 342.0,586.0 343.5,588.5 339.0,588.0 334.0,585.0 329.0,581.0 325.0,576.0" fill="#a9bfcd" stroke="#ffffff" stroke-width="0.25" stroke-opacity="0.5"/><polygon points="317.0,571.0 320.0,576.0 319.0,577.0 316.0,572.0" fill="#a9bfcd" stroke="#ffffff" stroke-width="0.25" stroke-opacity="0.5"/><polygon points="339.0,588.0 343.5,588.5 346.0,591.0 344.0,593.0 340.0,592.0" fill="#c8d4dc" stroke="#ffffff" stroke-width="0.25" stroke-opacity="0.5"/><polygon points="345.0,584.0 352.0,585.0 350.0,586.5" fill="#c8d4dc" stroke="#ffffff" stroke-width="0.25" stroke-opacity="0.5"/><polygon points="422.8,551.0 425.0,547.0 430.0,544.0 437.0,542.8 438.8,545.0 434.0,548.0 431.0,552.0 427.0,554.0" fill="#a4b9c6" stroke="#ffffff" stroke-width="0.25" stroke-opacity="0.5"/><polygon points="436.0,548.0 439.0,544.0 444.0,545.0 445.0,550.0 441.0,553.5 437.0,552.0" fill="#bfcdd6" stroke="#ffffff" stroke-width="0.25" stroke-opacity="0.5"/><polygon points="444.6,545.0 452.0,543.8 460.0,542.0 470.0,541.5 476.0,540.5 481.0,540.0 486.9,538.4 495.0,538.5 505.0,539.5 515.0,539.6 525.0,540.5 537.5,541.2 550.0,542.0 558.0,542.8 565.6,543.5 572.0,544.0 578.0,545.7 569.0,548.0 556.6,549.7 548.7,551.4 537.5,553.6 534.1,555.9 538.6,560.4 530.7,562.6 524.0,557.0 518.4,558.7 503.7,557.6 492.5,558.7 481.0,555.3 470.0,555.5 462.0,557.0 456.0,561.0 452.0,558.0 446.0,553.0 445.0,550.0" fill="#b3c5d0" stroke="#ffffff" stroke-width="0.25" stroke-opacity="0.5"/><polygon points="438.0,553.0 446.0,553.0 452.0,558.0 450.0,562.0 442.0,562.0 442.0,558.0" fill="#c2d0d9" stroke="#ffffff" stroke-width="0.25" stroke-opacity="0.5"/><polygon points="428.0,556.0 438.0,553.0 442.0,558.0 442.0,562.0 438.0,563.0 430.0,563.0 430.0,561.0" fill="#b5c6d1" stroke="#ffffff" stroke-width="0.25" stroke-opacity="0.5"/><polygon points="421.0,557.6 428.0,556.0 430.0,561.0 430.0,563.0 424.5,563.0 424.5,560.5" fill="#6f90a5" stroke="#ffffff" stroke-width="0.25" stroke-opacity="0.5"/><polygon points="412.8,555.0 416.0,552.3 419.7,557.0 418.0,560.8 413.0,560.8" fill="#7e9cb0" stroke="#ffffff" stroke-width="0.25" stroke-opacity="0.5"/><polygon points="410.0,555.5 413.0,555.5 412.5,558.5 410.0,558.5" fill="#a9bece" stroke="#ffffff" stroke-width="0.25" stroke-opacity="0.5"/><polygon points="415.5,559.0 421.0,557.6 424.5,560.5 424.5,563.0 424.0,565.6 417.5,565.6 415.0,562.0" fill="#95aebe" stroke="#ffffff" stroke-width="0.25" stroke-opacity="0.5"/><polygon points="410.6,565.5 417.5,565.2 417.5,570.4 411.0,570.4" fill="#90aabb" stroke="#ffffff" stroke-width="0.25" stroke-opacity="0.5"/><polygon points="424.5,563.0 428.0,563.0 433.0,569.5 431.0,570.5 426.0,566.0" fill="#a0b5c3" stroke="#ffffff" stroke-width="0.25" stroke-opacity="0.5"/><polygon points="430.0,563.0 438.0,563.0 442.0,562.0 441.0,566.0 436.0,569.0 431.0,566.0" fill="#b2c4cf" stroke="#ffffff" stroke-width="0.25" stroke-opacity="0.5"/><polygon points="450.0,562.0 455.0,561.5 456.0,566.5 449.0,565.5" fill="#c8d4dc" stroke="#ffffff" stroke-width="0.25" stroke-opacity="0.5"/><polygon points="441.0,566.0 449.0,565.5 456.0,566.5 456.0,570.5 441.0,570.5" fill="#a7bbc8" stroke="#ffffff" stroke-width="0.25" stroke-opacity="0.5"/><polygon points="459.0,562.0 456.0,561.0 462.0,557.0 470.0,555.5 481.0,555.3 492.5,558.7 492.0,561.5 485.0,566.0 472.0,566.0 461.0,566.0" fill="#dce5ea" stroke="#ffffff" stroke-width="0.25" stroke-opacity="0.5"/><polygon points="461.0,566.0 472.0,566.0 476.0,572.0 470.0,572.0 462.0,570.5" fill="#e2e6ea" stroke="#ffffff" stroke-width="0.25" stroke-opacity="0.5"/><polygon points="456.0,570.5 462.0,570.5 470.0,572.0 476.0,572.0 478.0,578.0 470.0,580.0 462.0,579.0 457.0,575.0" fill="#c0ced7" stroke="#ffffff" stroke-width="0.25" stroke-opacity="0.5"/><polygon points="472.0,566.0 485.0,566.0 481.8,568.8 484.6,573.3 478.0,578.0 476.0,572.0" fill="#d5dde3" stroke="#ffffff" stroke-width="0.25" stroke-opacity="0.5"/><polygon points="492.5,558.7 503.7,557.6 518.4,558.7 519.5,562.0 507.0,564.9 495.9,563.7 492.0,561.5" fill="#e2e4e6" stroke="#ffffff" stroke-width="0.25" stroke-opacity="0.5"/><polygon points="481.8,568.8 485.0,566.0 492.0,561.5 495.9,563.7 507.0,564.9 519.5,562.0 521.7,557.0 524.0,557.0 530.7,562.6 526.2,563.7 518.4,568.8 520.6,577.2 515.0,581.7 503.7,582.9 494.7,579.5 486.9,575.0 484.6,573.3" fill="#8eabbc" stroke="#ffffff" stroke-width="0.25" stroke-opacity="0.5"/><polygon points="478.0,578.0 484.6,573.3 486.9,575.0 494.7,579.5 498.0,580.6 492.5,582.9 487.0,588.0 483.5,593.0 480.0,586.0" fill="#9db5c4" stroke="#ffffff" stroke-width="0.25" stroke-opacity="0.5"/><polygon points="498.0,580.6 503.7,582.9 515.0,581.7 514.0,586.0 510.0,593.0 500.0,593.0 497.0,586.0 492.5,582.9" fill="#dcdae0" stroke="#ffffff" stroke-width="0.25" stroke-opacity="0.5"/><polygon points="524.0,567.5 526.5,567.5 526.0,570.0 524.0,570.0" fill="#566f7e" stroke="#ffffff" stroke-width="0.25" stroke-opacity="0.5"/><polygon points="538.6,563.7 539.5,565.0 537.0,571.0 529.0,574.5 528.0,573.5 535.0,569.5" fill="#8fa6b5" stroke="#ffffff" stroke-width="0.25" stroke-opacity="0.5"/><polygon points="550.4,551.0 556.6,550.0 554.0,555.0 551.5,557.6" fill="#b3c5d0" stroke="#ffffff" stroke-width="0.25" stroke-opacity="0.5"/><polygon points="521.0,580.0 522.5,580.0 522.0,583.0 520.5,583.0" fill="#c9d3da" stroke="#ffffff" stroke-width="0.25" stroke-opacity="0.5"/></svg>
<svg class="r" style="left:0px;top:0px" width="1067" height="593" viewBox="0 0 1067 593"><polygon points="871.6,584.0 874.3,577.0 879.3,572.0 891.3,572.0 891.3,590.0 893.3,590.0 907.3,590.0 907.3,593.0 871.3,593.0" fill="#e1e4e7" stroke="#ffffff" stroke-width="0.25" stroke-opacity="0.5"/><polygon points="891.3,572.0 899.3,573.0 907.3,575.7 907.3,590.0 893.3,590.0 891.3,582.0" fill="#d4dee5" stroke="#ffffff" stroke-width="0.25" stroke-opacity="0.5"/><polygon points="907.3,583.0 914.8,583.0 918.3,593.0 907.3,593.0" fill="#a9bdca" stroke="#ffffff" stroke-width="0.25" stroke-opacity="0.5"/><polygon points="907.2,575.7 914.6,575.7 914.8,583.0 907.3,583.0" fill="#9cb3c2" stroke="#ffffff" stroke-width="0.25" stroke-opacity="0.5"/><polygon points="915.7,574.6 922.3,577.0 929.3,579.0 932.3,586.0 930.3,591.0 922.3,593.0 918.3,586.0" fill="#a5b9c7" stroke="#ffffff" stroke-width="0.25" stroke-opacity="0.5"/><polygon points="915.3,570.5 923.3,570.5 924.3,575.0 922.3,577.0 915.7,574.6" fill="#b5c5d0" stroke="#ffffff" stroke-width="0.25" stroke-opacity="0.5"/><polygon points="826.3,531.5 847.3,531.0 873.3,531.5 870.3,535.0 863.3,538.0 857.3,543.0 850.3,548.0 846.7,550.0 842.3,545.0 839.3,540.0 832.3,536.0 826.3,533.0" fill="#dcdcdc" stroke="#ffffff" stroke-width="0.25" stroke-opacity="0.5"/><polygon points="865.8,545.0 872.3,544.8 871.3,547.0 866.3,547.0" fill="#d6d6d6" stroke="#ffffff" stroke-width="0.25" stroke-opacity="0.5"/><polygon points="894.9,534.5 901.3,533.5 907.7,534.5 903.3,536.0 897.3,536.0" fill="#b9c7d0" stroke="#ffffff" stroke-width="0.25" stroke-opacity="0.5"/><polygon points="930.0,540.0 935.3,538.0 942.3,537.5 937.3,540.0 932.3,541.5" fill="#8ca9ba" stroke="#ffffff" stroke-width="0.25" stroke-opacity="0.5"/><polygon points="807.3,541.0 813.3,539.0 819.3,538.5 825.3,540.0 831.3,545.0 828.3,546.0 822.3,544.0 815.3,543.0 808.3,543.5" fill="#93adbf" stroke="#ffffff" stroke-width="0.25" stroke-opacity="0.5"/><polygon points="779.3,539.5 785.3,537.5 793.3,538.0 800.3,540.0 804.3,542.0 792.3,542.2 782.3,541.8" fill="#93adbf" stroke="#ffffff" stroke-width="0.25" stroke-opacity="0.5"/><polygon points="771.3,538.0 777.3,536.5 780.3,539.0 775.3,541.0" fill="#93adbf" stroke="#ffffff" stroke-width="0.25" stroke-opacity="0.5"/><polygon points="783.3,535.5 790.3,533.5 793.3,535.5 787.3,537.0" fill="#93adbf" stroke="#ffffff" stroke-width="0.25" stroke-opacity="0.5"/><polygon points="800.3,537.5 808.3,536.0 811.3,538.0 804.3,539.5" fill="#93adbf" stroke="#ffffff" stroke-width="0.25" stroke-opacity="0.5"/><polygon points="812.3,545.0 816.3,544.5 815.3,547.0 812.3,547.0" fill="#93adbf" stroke="#ffffff" stroke-width="0.25" stroke-opacity="0.5"/><polygon points="789.3,534.5 797.3,533.5 805.3,535.0 811.3,537.0 803.3,538.0 793.3,537.0" fill="#93adbf" stroke="#ffffff" stroke-width="0.25" stroke-opacity="0.5"/><polygon points="811.3,533.0 819.3,531.5 829.3,531.3 832.3,533.0 825.3,536.0 817.3,537.0 812.3,536.0" fill="#93adbf" stroke="#ffffff" stroke-width="0.25" stroke-opacity="0.5"/><polygon points="765.5,542.5 779.3,542.7 803.3,542.7 811.3,543.3 816.3,545.3 811.3,546.5 805.8,548.0 809.3,552.5 816.3,558.5 819.3,557.0 821.3,552.0 823.3,548.5 821.8,546.0 826.3,545.0 831.3,548.0 836.3,553.0 839.3,558.0 843.3,561.0 835.3,562.0 827.3,563.0 820.3,565.5 817.3,562.0 811.8,560.2 780.9,560.2 774.3,557.0 769.3,553.0 765.5,551.5" fill="#8eaabb" stroke="#ffffff" stroke-width="0.25" stroke-opacity="0.5"/><polygon points="744.3,545.5 747.3,542.5 755.3,542.0 765.5,542.5 765.5,551.5 761.3,550.0 756.3,551.0 750.3,554.0 746.3,555.5 749.3,552.0 745.3,549.0" fill="#4c7893" stroke="#ffffff" stroke-width="0.25" stroke-opacity="0.5"/><polygon points="780.9,560.2 811.8,560.2 817.3,562.0 820.3,565.5 827.3,563.0 825.3,566.0 821.3,570.0 817.3,573.0 815.3,575.0 817.3,579.0 815.3,579.5 812.3,575.5 807.3,575.0 803.3,578.0 799.3,575.5 794.3,573.0 789.3,572.0 782.3,569.0 780.3,565.0" fill="#3f6f8e" stroke="#ffffff" stroke-width="0.25" stroke-opacity="0.5"/><polygon points="789.3,572.0 794.3,573.0 799.3,575.5 803.3,578.0 805.3,583.0 809.3,586.0 810.8,588.5 806.3,588.0 801.3,585.0 796.3,581.0 792.3,576.0" fill="#a3bacb" stroke="#ffffff" stroke-width="0.25" stroke-opacity="0.5"/><polygon points="784.3,571.0 787.3,576.0 786.3,577.0 783.3,572.0" fill="#a3bacb" stroke="#ffffff" stroke-width="0.25" stroke-opacity="0.5"/><polygon points="806.3,588.0 810.8,588.5 813.3,591.0 811.3,593.0 807.3,592.0" fill="#c3d1da" stroke="#ffffff" stroke-width="0.25" stroke-opacity="0.5"/><polygon points="812.3,584.0 819.3,585.0 817.3,586.5" fill="#c3d1da" stroke="#ffffff" stroke-width="0.25" stroke-opacity="0.5"/><polygon points="890.1,551.0 892.3,547.0 897.3,544.0 904.3,542.8 906.1,545.0 901.3,548.0 898.3,552.0 894.3,554.0" fill="#97afbf" stroke="#ffffff" stroke-width="0.25" stroke-opacity="0.5"/><polygon points="903.3,548.0 906.3,544.0 911.3,545.0 912.3,550.0 908.3,553.5 904.3,552.0" fill="#aabdca" stroke="#ffffff" stroke-width="0.25" stroke-opacity="0.5"/><polygon points="911.9,545.0 919.3,543.8 927.3,542.0 937.3,541.5 943.3,540.5 948.3,540.0 954.2,538.4 962.3,538.5 972.3,539.5 982.3,539.6 992.3,540.5 1004.8,541.2 1017.3,542.0 1025.3,542.8 1032.9,543.5 1039.3,544.0 1045.3,545.7 1036.3,548.0 1023.9,549.7 1016.0,551.4 1004.8,553.6 1001.4,555.9 1005.9,560.4 998.0,562.6 991.3,557.0 985.7,558.7 971.0,557.6 959.8,558.7 948.3,555.3 937.3,555.5 929.3,557.0 923.3,561.0 919.3,558.0 913.3,553.0 912.3,550.0" fill="#8ca9ba" stroke="#ffffff" stroke-width="0.25" stroke-opacity="0.5"/><polygon points="905.3,553.0 913.3,553.0 919.3,558.0 917.3,562.0 909.3,562.0 909.3,558.0" fill="#a9bdca" stroke="#ffffff" stroke-width="0.25" stroke-opacity="0.5"/><polygon points="895.3,556.0 905.3,553.0 909.3,558.0 909.3,562.0 905.3,563.0 897.3,563.0 897.3,561.0" fill="#a9bdca" stroke="#ffffff" stroke-width="0.25" stroke-opacity="0.5"/><polygon points="888.3,557.6 895.3,556.0 897.3,561.0 897.3,563.0 891.8,563.0 891.8,560.5" fill="#7393a8" stroke="#ffffff" stroke-width="0.25" stroke-opacity="0.5"/><polygon points="880.1,555.0 883.3,552.3 887.0,557.0 885.3,560.8 880.3,560.8" fill="#6b8fa6" stroke="#ffffff" stroke-width="0.25" stroke-opacity="0.5"/><polygon points="877.3,555.5 880.3,555.5 879.8,558.5 877.3,558.5" fill="#a0b7c6" stroke="#ffffff" stroke-width="0.25" stroke-opacity="0.5"/><polygon points="882.8,559.0 888.3,557.6 891.8,560.5 891.8,563.0 891.3,565.6 884.8,565.6 882.3,562.0" fill="#4f7b95" stroke="#ffffff" stroke-width="0.25" stroke-opacity="0.5"/><polygon points="877.9,565.5 884.8,565.2 884.8,570.4 878.3,570.4" fill="#8ea9ba" stroke="#ffffff" stroke-width="0.25" stroke-opacity="0.5"/><polygon points="891.8,563.0 895.3,563.0 900.3,569.5 898.3,570.5 893.3,566.0" fill="#99b0bf" stroke="#ffffff" stroke-width="0.25" stroke-opacity="0.5"/><polygon points="897.3,563.0 905.3,563.0 909.3,562.0 908.3,566.0 903.3,569.0 898.3,566.0" fill="#a8bccb" stroke="#ffffff" stroke-width="0.25" stroke-opacity="0.5"/><polygon points="917.3,562.0 922.3,561.5 923.3,566.5 916.3,565.5" fill="#b9c8d2" stroke="#ffffff" stroke-width="0.25" stroke-opacity="0.5"/><polygon points="908.3,566.0 916.3,565.5 923.3,566.5 923.3,570.5 908.3,570.5" fill="#9bb2c1" stroke="#ffffff" stroke-width="0.25" stroke-opacity="0.5"/><polygon points="926.3,562.0 923.3,561.0 929.3,557.0 937.3,555.5 948.3,555.3 959.8,558.7 959.3,561.5 952.3,566.0 939.3,566.0 928.3,566.0" fill="#a9becb" stroke="#ffffff" stroke-width="0.25" stroke-opacity="0.5"/><polygon points="928.3,566.0 939.3,566.0 943.3,572.0 937.3,572.0 929.3,570.5" fill="#c8d5de" stroke="#ffffff" stroke-width="0.25" stroke-opacity="0.5"/><polygon points="923.3,570.5 929.3,570.5 937.3,572.0 943.3,572.0 945.3,578.0 937.3,580.0 929.3,579.0 924.3,575.0" fill="#b3c4cf" stroke="#ffffff" stroke-width="0.25" stroke-opacity="0.5"/><polygon points="939.3,566.0 952.3,566.0 949.1,568.8 951.9,573.3 945.3,578.0 943.3,572.0" fill="#c3d0d9" stroke="#ffffff" stroke-width="0.25" stroke-opacity="0.5"/><polygon points="959.8,558.7 971.0,557.6 985.7,558.7 986.8,562.0 974.3,564.9 963.2,563.7 959.3,561.5" fill="#e4e8ea" stroke="#ffffff" stroke-width="0.25" stroke-opacity="0.5"/><polygon points="949.1,568.8 952.3,566.0 959.3,561.5 963.2,563.7 974.3,564.9 986.8,562.0 989.0,557.0 991.3,557.0 998.0,562.6 993.5,563.7 985.7,568.8 987.9,577.2 982.3,581.7 971.0,582.9 962.0,579.5 954.2,575.0 951.9,573.3" fill="#86a3b5" stroke="#ffffff" stroke-width="0.25" stroke-opacity="0.5"/><polygon points="945.3,578.0 951.9,573.3 954.2,575.0 962.0,579.5 965.3,580.6 959.8,582.9 954.3,588.0 950.8,593.0 947.3,586.0" fill="#93adbd" stroke="#ffffff" stroke-width="0.25" stroke-opacity="0.5"/><polygon points="965.3,580.6 971.0,582.9 982.3,581.7 981.3,586.0 977.3,593.0 967.3,593.0 964.3,586.0 959.8,582.9" fill="#d5d8dc" stroke="#ffffff" stroke-width="0.25" stroke-opacity="0.5"/><polygon points="991.3,567.5 993.8,567.5 993.3,570.0 991.3,570.0" fill="#5b7485" stroke="#ffffff" stroke-width="0.25" stroke-opacity="0.5"/><polygon points="1005.9,563.7 1006.8,565.0 1004.3,571.0 996.3,574.5 995.3,573.5 1002.3,569.5" fill="#8aa6b8" stroke="#ffffff" stroke-width="0.25" stroke-opacity="0.5"/><polygon points="1017.7,551.0 1023.9,550.0 1021.3,555.0 1018.8,557.6" fill="#8ca9ba" stroke="#ffffff" stroke-width="0.25" stroke-opacity="0.5"/><polygon points="988.3,580.0 989.8,580.0 989.3,583.0 987.8,583.0" fill="#bac8d1" stroke="#ffffff" stroke-width="0.25" stroke-opacity="0.5"/></svg>
<svg class="r" style="left:0px;top:0px" width="1067" height="593" viewBox="0 0 1067 593"><circle cx="328.8" cy="568.2" r="1.7" fill="none" stroke="#a8c0d0" stroke-width="0.6"/><circle cx="796.1" cy="568.2" r="1.6" fill="#8fb3cc"/></svg>
<svg class="r" style="left:657px;top:417px" width="8" height="10" viewBox="0 0 8 10"><path d="M1 0.5L1 8L2.8 6.3L4.3 9.3L5.4 8.8L4 5.9L6.6 5.8Z" fill="#111" stroke="#fff" stroke-width="0.5"/></svg>
</div></body></html>
